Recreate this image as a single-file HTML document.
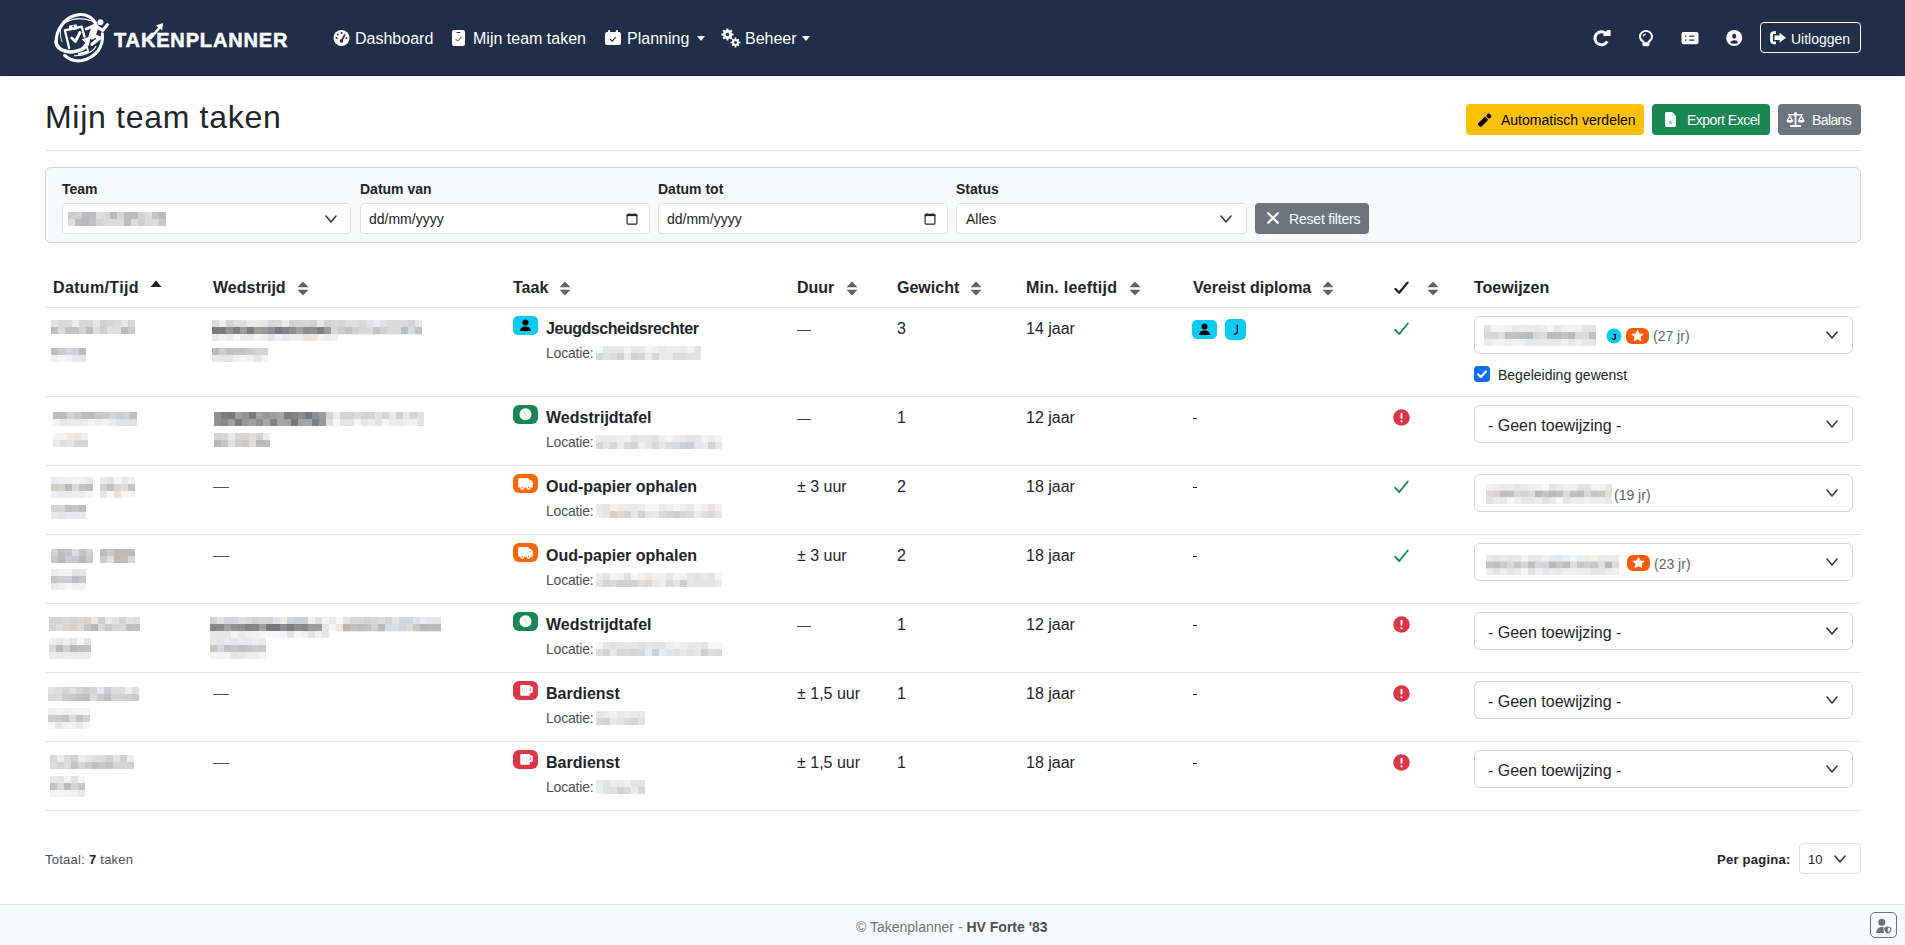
<!DOCTYPE html>
<html><head><meta charset="utf-8"><title>Mijn team taken</title><style>
*{box-sizing:border-box;margin:0;padding:0}
html,body{width:1905px;height:945px;overflow:hidden;background:#fff;font-family:"Liberation Sans",sans-serif;color:#212529}
.a{position:absolute;white-space:nowrap}
.blur{position:absolute;display:block}
svg{display:block}
.nav{position:absolute;left:0;top:0;width:1905px;height:75px;background:#202e4a;box-shadow:0 1px 0 #18203a,0 2px 6px rgba(0,0,0,.08)}
.nt{color:#fff;font-size:16px;line-height:20px}
.btn{position:absolute;border-radius:4px;font-size:14px;line-height:20px}
.card{position:absolute;left:45px;top:167px;width:1816px;height:76px;background:#f8f9fa;border:1px solid #d3d6da;border-radius:6px}
.lbl{font-size:14px;font-weight:bold;color:#212529;line-height:16px}
.inp{position:absolute;background:#fff;border:1px solid #dee2e6;border-radius:4px;height:31px}
.th{font-size:16px;font-weight:bold;line-height:20px;color:#212529}
.hl{position:absolute;left:45px;width:1816px;height:1px;background:#dee2e6}
.td{font-size:16px;line-height:20px;color:#212529}
.tn{font-size:16px;font-weight:bold;line-height:20px;color:#212529}
.loc{font-size:14px;line-height:18px;color:#4a4f55}
.sel{position:absolute;left:1474px;width:379px;height:38px;background:#fff;border:1px solid #cfd4da;border-radius:6px}
.ti{position:absolute;left:513px;width:25px;height:19px;border-radius:5px}
</style></head><body>
<div class="nav"></div>
<svg class="a" style="left:52px;top:12px" width="60" height="54" viewBox="0 0 1050 945">
<g fill="none" stroke="#fff" stroke-linecap="round" stroke-linejoin="round">
<path d="M75 540 C60 300 250 60 480 45 C600 40 700 90 760 190" stroke-width="55"/>
<path d="M250 175 C380 105 560 100 720 165" stroke-width="24"/>
<path d="M200 150 C140 250 130 420 175 520" stroke-width="16"/>
<path d="M70 520 C90 690 320 740 510 660 C570 630 600 590 625 510" stroke-width="62"/>
<path d="M880 380 C910 610 760 800 520 850 C400 870 300 830 220 760" stroke-width="55"/>
<path d="M770 600 C720 700 560 770 390 765" stroke-width="20"/>
<path d="M300 630 L225 320 L520 258 L568 430" stroke-width="40"/>
<path d="M605 595 L632 690 L470 735" stroke-width="36"/>
<path d="M345 455 L410 515 L488 360" stroke-width="52"/>
<path d="M755 260 L700 420" stroke-width="120"/>
<path d="M735 240 L600 295" stroke-width="55"/>
<path d="M770 250 L890 320 L968 222" stroke-width="55"/>
<path d="M730 410 L835 455 L700 565" stroke-width="60"/>
</g>
<g fill="#fff">
<path d="M520 475 L680 425 L640 600 Z"/>
<circle cx="848" cy="178" r="52"/>
<path d="M295 240 L430 215 L445 300 L310 325 Z"/>
</g>
<circle cx="370" cy="252" r="14" fill="#202e4a"/>
</svg>
<div class="a" style="left:114px;top:28px;color:#fff;font-size:20px;font-weight:bold;letter-spacing:0.85px;line-height:24px;-webkit-text-stroke:0.5px #fff">TAKENPLANNER</div>
<svg class="a" style="left:148px;top:21px" width="17" height="19" viewBox="0 0 17 19"><path d="M2 18 L12.5 5.5" stroke="#fff" stroke-width="2.6"/><path d="M8 4.6 L15 2 L14.2 9.5 Z" fill="#fff"/></svg>
<svg class="a" style="left:333px;top:30px" width="17" height="16" viewBox="0 0 16 16"><circle cx="8" cy="8" r="8" fill="#fff"/><circle cx="8" cy="3" r="1" fill="#202e4a"/><circle cx="4.3" cy="4.6" r="1" fill="#202e4a"/><circle cx="3" cy="8" r="1" fill="#202e4a"/><circle cx="13" cy="8" r="1" fill="#202e4a"/><path d="M8 11 L11.5 4.5" stroke="#202e4a" stroke-width="1.6"/><circle cx="8" cy="11" r="1.8" fill="#202e4a"/></svg>
<div class="a nt" style="left:355px;top:29px">Dashboard</div>
<svg class="a" style="left:452px;top:30px" width="13" height="16" viewBox="0 0 13 16"><rect x="0" y="0" width="13" height="16" rx="2" fill="#fff"/><rect x="4.5" y="2" width="4" height="1.1" rx="0.5" fill="#202e4a"/><path d="M3.8 9.2 L5.7 11.1 L9.3 7" fill="none" stroke="#202e4a" stroke-width="0.9"/></svg>
<div class="a nt" style="left:473px;top:29px">Mijn team taken</div>
<svg class="a" style="left:605px;top:30px" width="16" height="15" viewBox="0 0 16 15"><rect x="0" y="2" width="16" height="13" rx="2" fill="#fff"/><rect x="3" y="0" width="2.2" height="4" rx="1" fill="#fff"/><rect x="10.8" y="0" width="2.2" height="4" rx="1" fill="#fff"/><path d="M5 9 L7.2 11.2 L11 7" fill="none" stroke="#202e4a" stroke-width="1.1"/></svg>
<div class="a nt" style="left:627px;top:29px">Planning</div>
<div class="a" style="left:697px;top:36px;width:0;height:0;border-left:4.5px solid transparent;border-right:4.5px solid transparent;border-top:5px solid #fff"></div>
<svg class="a" style="left:721px;top:28px" width="20" height="20" viewBox="0 0 20 20"><g fill="#fff"><circle cx="6.5" cy="6.5" r="4.5"/><path d="M5.5 0.5h2v2.5h-2zM5.5 10h2v2.5h-2zM0.5 5.5h2.5v2h-2.5zM10 5.5h2.5v2h-2.5zM1.5 2.9l1.4-1.4 1.8 1.8-1.4 1.4zM8.3 9.7l1.4-1.4 1.8 1.8-1.4 1.4zM1.5 10.1l1.8-1.8 1.4 1.4-1.8 1.8zM8.3 3.3l1.8-1.8 1.4 1.4-1.8 1.8z"/><circle cx="14.5" cy="14.5" r="3.6"/><path d="M13.7 9.5h1.6v2h-1.6zM13.7 17.5h1.6v2h-1.6zM9.5 13.7h2v1.6h-2zM17.5 13.7h2v1.6h-2zM10.7 11.8l1.1-1.1 1.4 1.4-1.1 1.1zM15.8 16.9l1.1-1.1 1.4 1.4-1.1 1.1zM10.7 17.2l1.4-1.4 1.1 1.1-1.4 1.4zM15.8 12.1l1.4-1.4 1.1 1.1-1.4 1.4z"/></g><circle cx="6.5" cy="6.5" r="1.7" fill="#202e4a"/><circle cx="14.5" cy="14.5" r="1.4" fill="#202e4a"/></svg>
<div class="a nt" style="left:745px;top:29px">Beheer</div>
<div class="a" style="left:802px;top:36px;width:0;height:0;border-left:4.5px solid transparent;border-right:4.5px solid transparent;border-top:5px solid #fff"></div>
<svg class="a" style="left:1593px;top:30px" width="18" height="17" viewBox="0 0 18 17"><path d="M12.68 3.32 A6.5 6.5 0 1 0 14.24 11.35" fill="none" stroke="#fff" stroke-width="3.0"/><path d="M14.4 0 H17.6 V5.9 H10.5 V4.4Z" fill="#fff"/></svg>
<svg class="a" style="left:1639px;top:30px" width="14" height="17" viewBox="0 0 14 17"><path d="M7 0 C10.9 0 14 3 14 6.7 C14 9.2 12.3 10.9 11 12.6 H3 C1.7 10.9 0 9.2 0 6.7 C0 3 3.1 0 7 0Z" fill="#fff"/><path d="M7 2.0 C4.2 2.0 2.0 4.1 2.0 6.6 C2.0 8.3 3.6 9.8 5.2 11.2 L7 12.3 L8.8 11.2 C10.4 9.8 12 8.3 12 6.6 C12 4.1 9.8 2.0 7 2.0Z" fill="#202e4a"/><path d="M3.4 12.4 H10.6 V14.3 A1.9 1.9 0 0 1 8.7 16.2 H5.3 A1.9 1.9 0 0 1 3.4 14.3Z" fill="#fff"/><path d="M4.1 6.4 A3 3 0 0 1 6.8 4.1" fill="none" stroke="#fff" stroke-width="1.4"/></svg>
<svg class="a" style="left:1681px;top:32px" width="18" height="13" viewBox="0 0 18 13"><rect x="0.5" y="0" width="17" height="12.3" rx="2" fill="#fff"/><rect x="4" y="3.5" width="1.4" height="1.4" fill="#3a4560"/><rect x="8.2" y="3.5" width="5" height="1.4" fill="#3a4560"/><rect x="4" y="7.4" width="1.4" height="1.4" fill="#3a4560"/><rect x="8.2" y="7.4" width="5" height="1.4" fill="#3a4560"/></svg>
<svg class="a" style="left:1725px;top:30px" width="18" height="16" viewBox="0 0 16 16"><circle cx="8.2" cy="8" r="8" fill="#fff"/><ellipse cx="8.2" cy="6.2" rx="2" ry="2.6" fill="#202e4a"/><path d="M4.4 13 C4.8 11 6.3 10.3 8.2 10.3 C10.1 10.3 11.6 11 12 13 C10.9 13.6 9.6 13.8 8.2 13.8 C6.8 13.8 5.5 13.6 4.4 13Z" fill="#202e4a"/></svg>
<div class="btn" style="left:1760px;top:22px;width:101px;height:31px;border:1px solid #fff"></div>
<svg class="a" style="left:1770px;top:30px" width="16" height="15" viewBox="0 0 16 15"><path d="M6 2.6 H3.8 A2.3 2.3 0 0 0 1.5 4.9 V10.6 A2.3 2.3 0 0 0 3.8 12.9 H6" fill="none" stroke="#fff" stroke-width="2.8"/><path d="M9.6 2.7 L15.9 7.8 L9.6 12.8 V9.9 H4.5 V5.6 H9.6 Z" fill="#fff"/></svg>
<div class="a nt" style="left:1791px;top:29px;font-size:14px">Uitloggen</div>
<div class="a" style="left:45px;top:97px;font-size:32px;line-height:40px;letter-spacing:0.7px;color:#212529">Mijn team taken</div>
<div class="btn" style="left:1466px;top:104px;width:178px;height:31px;background:#ffc107"></div>
<svg class="a" style="left:1476px;top:112px" width="17" height="16" viewBox="0 0 17 16"><rect x="1.4" y="7.65" width="11" height="4.6" rx="1.2" transform="rotate(-45 6.9 9.95)" fill="#000"/><rect x="10.9" y="1.65" width="4" height="4.6" rx="1.2" transform="rotate(-45 12.9 3.95)" fill="#000"/></svg>
<div class="a" style="left:1501px;top:110px;font-size:14px;line-height:20px;color:#000">Automatisch verdelen</div>
<div class="btn" style="left:1652px;top:104px;width:118px;height:31px;background:#198754"></div>
<svg class="a" style="left:1665px;top:112px" width="11" height="15" viewBox="0 0 11 15"><path d="M1.5 0 H7 L11 4 V13.5 A1.5 1.5 0 0 1 9.5 15 H1.5 A1.5 1.5 0 0 1 0 13.5 V1.5 A1.5 1.5 0 0 1 1.5 0Z" fill="#fff"/><path d="M7 0 V4 H11" fill="#d1e7dd"/><path d="M3.9 8.4 L7 12 M7 8.4 L3.9 12" stroke="#3a9a6a" stroke-width="0.7"/></svg>
<div class="a" style="left:1687px;top:110px;font-size:14px;line-height:20px;color:#fff;letter-spacing:-0.5px">Export Excel</div>
<div class="btn" style="left:1778px;top:104px;width:83px;height:31px;background:#6c757d"></div>
<svg class="a" style="left:1786px;top:112px" width="19" height="15" viewBox="0 0 19 15"><g fill="#fff"><rect x="8.6" y="1" width="1.8" height="12"/><rect x="4" y="13" width="11" height="2" rx="0.5"/><rect x="2" y="2" width="15" height="1.6" rx="0.8"/><circle cx="9.5" cy="1.5" r="1.5"/><path d="M0.5 8.5 L3.8 3 L7.1 8.5 A3.3 2.2 0 0 1 0.5 8.5Z"/><path d="M11.9 8.5 L15.2 3 L18.5 8.5 A3.3 2.2 0 0 1 11.9 8.5Z"/></g><path d="M2.3 8 L3.8 5.4 L5.3 8Z M13.7 8 L15.2 5.4 L16.7 8Z" fill="#6c757d"/></svg>
<div class="a" style="left:1812px;top:110px;font-size:14px;line-height:20px;color:#fff;letter-spacing:-0.6px">Balans</div>
<div class="hl" style="top:150px"></div>
<div class="card"></div>
<div class="a lbl" style="left:62px;top:181px">Team</div>
<div class="a lbl" style="left:360px;top:181px">Datum van</div>
<div class="a lbl" style="left:658px;top:181px">Datum tot</div>
<div class="a lbl" style="left:956px;top:181px">Status</div>
<div class="inp" style="left:62px;top:203px;width:289px"></div>
<svg class="blur" style="left:68px;top:212px;width:98px;height:14px" viewBox="0 0 98 14.0"><rect x="0" y="0.0" width="7" height="7.3" fill="#cfccc9"/><rect x="7" y="0.0" width="7" height="7.3" fill="#d1d1d1"/><rect x="14" y="0.0" width="7" height="7.3" fill="#babbbf"/><rect x="21" y="0.0" width="7" height="7.3" fill="#bbbec2"/><rect x="28" y="0.0" width="7" height="7.3" fill="#dddddd"/><rect x="35" y="0.0" width="7" height="7.3" fill="#dbd8d5"/><rect x="42" y="0.0" width="7" height="7.3" fill="#bababa"/><rect x="49" y="0.0" width="7" height="7.3" fill="#d7d5d3"/><rect x="56" y="0.0" width="7" height="7.3" fill="#bfbcb9"/><rect x="63" y="0.0" width="7" height="7.3" fill="#bbbcc0"/><rect x="70" y="0.0" width="7" height="7.3" fill="#d3d3d3"/><rect x="77" y="0.0" width="7" height="7.3" fill="#dcdcdc"/><rect x="84" y="0.0" width="7" height="7.3" fill="#c4c5c9"/><rect x="91" y="0.0" width="7" height="7.3" fill="#b9babe"/><rect x="0" y="7.0" width="7" height="7.3" fill="#e1dfdd"/><rect x="7" y="7.0" width="7" height="7.3" fill="#bebbb8"/><rect x="14" y="7.0" width="7" height="7.3" fill="#b8b9bd"/><rect x="21" y="7.0" width="7" height="7.3" fill="#bdc0c4"/><rect x="28" y="7.0" width="7" height="7.3" fill="#d5d2cf"/><rect x="35" y="7.0" width="7" height="7.3" fill="#dadada"/><rect x="42" y="7.0" width="7" height="7.3" fill="#d9dce0"/><rect x="49" y="7.0" width="7" height="7.3" fill="#dedbd8"/><rect x="56" y="7.0" width="7" height="7.3" fill="#bcbdc1"/><rect x="63" y="7.0" width="7" height="7.3" fill="#dfdcd9"/><rect x="70" y="7.0" width="7" height="7.3" fill="#cfcfcf"/><rect x="77" y="7.0" width="7" height="7.3" fill="#dbdbdb"/><rect x="84" y="7.0" width="7" height="7.3" fill="#dcdcdc"/><rect x="91" y="7.0" width="7" height="7.3" fill="#c9c7c5"/></svg>
<svg class="a" style="left:325px;top:215px" width="12" height="8" viewBox="0 0 12 8"><path d="M1 1 L6.0 7.0 L11 1" fill="none" stroke="#343a40" stroke-width="1.6" stroke-linecap="round" stroke-linejoin="round"/></svg>
<div class="inp" style="left:360px;top:203px;width:290px"></div>
<div class="a" style="left:369px;top:210px;font-size:14px;line-height:18px;color:#212529">dd/mm/yyyy</div>
<svg class="a" style="left:626px;top:212px" width="12" height="13" viewBox="0 0 12 13"><rect x="1.1" y="2.3" width="9.8" height="9.9" rx="1" fill="none" stroke="#212529" stroke-width="1.2"/><rect x="0.8" y="2" width="10.4" height="2.1" fill="#212529"/><path d="M2.5 2 L3 0.4 L3.5 2Z M8.5 2 L9 0.4 L9.5 2Z" fill="#212529"/></svg>
<div class="inp" style="left:658px;top:203px;width:290px"></div>
<div class="a" style="left:667px;top:210px;font-size:14px;line-height:18px;color:#212529">dd/mm/yyyy</div>
<svg class="a" style="left:924px;top:212px" width="12" height="13" viewBox="0 0 12 13"><rect x="1.1" y="2.3" width="9.8" height="9.9" rx="1" fill="none" stroke="#212529" stroke-width="1.2"/><rect x="0.8" y="2" width="10.4" height="2.1" fill="#212529"/><path d="M2.5 2 L3 0.4 L3.5 2Z M8.5 2 L9 0.4 L9.5 2Z" fill="#212529"/></svg>
<div class="inp" style="left:956px;top:203px;width:291px"></div>
<div class="a" style="left:966px;top:210px;font-size:14px;line-height:18px;color:#212529">Alles</div>
<svg class="a" style="left:1220px;top:215px" width="12" height="8" viewBox="0 0 12 8"><path d="M1 1 L6.0 7.0 L11 1" fill="none" stroke="#343a40" stroke-width="1.6" stroke-linecap="round" stroke-linejoin="round"/></svg>
<div class="btn" style="left:1255px;top:203px;width:114px;height:31px;background:#6c757d"></div>
<svg class="a" style="left:1267px;top:212px" width="12" height="12" viewBox="0 0 12 12"><path d="M1.2 1.2 L10.8 10.8 M10.8 1.2 L1.2 10.8" stroke="#fff" stroke-width="2.2" stroke-linecap="round"/></svg>
<div class="a" style="left:1289px;top:209px;font-size:14px;line-height:20px;color:#fff;letter-spacing:-0.2px">Reset filters</div>
<div class="a th" style="left:53px;top:278px;letter-spacing:0.35px">Datum/Tijd</div>
<div class="a th" style="left:213px;top:278px;letter-spacing:0">Wedstrijd</div>
<svg class="a" style="left:297px;top:281px" width="12" height="15" viewBox="0 0 12 15"><path d="M6 0.5 L11.5 6.3 H0.5Z M6 14.5 L11.5 8.7 H0.5Z" fill="#5f6368"/></svg>
<div class="a th" style="left:513px;top:278px;letter-spacing:0">Taak</div>
<svg class="a" style="left:559px;top:281px" width="12" height="15" viewBox="0 0 12 15"><path d="M6 0.5 L11.5 6.3 H0.5Z M6 14.5 L11.5 8.7 H0.5Z" fill="#5f6368"/></svg>
<div class="a th" style="left:797px;top:278px;letter-spacing:0">Duur</div>
<svg class="a" style="left:846px;top:281px" width="12" height="15" viewBox="0 0 12 15"><path d="M6 0.5 L11.5 6.3 H0.5Z M6 14.5 L11.5 8.7 H0.5Z" fill="#5f6368"/></svg>
<div class="a th" style="left:897px;top:278px;letter-spacing:0">Gewicht</div>
<svg class="a" style="left:970px;top:281px" width="12" height="15" viewBox="0 0 12 15"><path d="M6 0.5 L11.5 6.3 H0.5Z M6 14.5 L11.5 8.7 H0.5Z" fill="#5f6368"/></svg>
<div class="a th" style="left:1026px;top:278px;letter-spacing:0.25px">Min. leeftijd</div>
<svg class="a" style="left:1129px;top:281px" width="12" height="15" viewBox="0 0 12 15"><path d="M6 0.5 L11.5 6.3 H0.5Z M6 14.5 L11.5 8.7 H0.5Z" fill="#5f6368"/></svg>
<div class="a th" style="left:1193px;top:278px;letter-spacing:0">Vereist diploma</div>
<svg class="a" style="left:1322px;top:281px" width="12" height="15" viewBox="0 0 12 15"><path d="M6 0.5 L11.5 6.3 H0.5Z M6 14.5 L11.5 8.7 H0.5Z" fill="#5f6368"/></svg>
<div class="a th" style="left:1474px;top:278px;letter-spacing:0">Toewijzen</div>
<svg class="a" style="left:150px;top:280px" width="12" height="8" viewBox="0 0 12 8"><path d="M6 0.5 L11.5 7 H0.5Z" fill="#212529"/></svg>
<svg class="a" style="left:1394px;top:281px" width="15" height="14" viewBox="0 0 15 14"><path d="M1.5 8 L5.2 11.8 L13.6 1.6" fill="none" stroke="#212529" stroke-width="2.3" stroke-linecap="round" stroke-linejoin="round"/></svg>
<svg class="a" style="left:1427px;top:281px" width="12" height="15" viewBox="0 0 12 15"><path d="M6 0.5 L11.5 6.3 H0.5Z M6 14.5 L11.5 8.7 H0.5Z" fill="#5f6368"/></svg>
<div class="hl" style="top:307px;background:#dfe2e6"></div>
<div class="hl" style="top:396px"></div>
<div class="hl" style="top:465px"></div>
<div class="hl" style="top:534px"></div>
<div class="hl" style="top:603px"></div>
<div class="hl" style="top:672px"></div>
<div class="hl" style="top:741px"></div>
<div class="hl" style="top:810px"></div>
<svg class="blur" style="left:51px;top:320px;width:84px;height:14px" viewBox="0 0 84 14.0"><rect x="0" y="0.0" width="7" height="7.3" fill="#e1e2e6"/><rect x="7" y="0.0" width="7" height="7.3" fill="#d8dbdf"/><rect x="14" y="0.0" width="7" height="7.3" fill="#dadbdf"/><rect x="21" y="0.0" width="7" height="7.3" fill="#efedeb"/><rect x="28" y="0.0" width="7" height="7.3" fill="#d6d9dd"/><rect x="35" y="0.0" width="7" height="7.3" fill="#d8d5d2"/><rect x="42" y="0.0" width="7" height="7.3" fill="#e7e4e1"/><rect x="49" y="0.0" width="7" height="7.3" fill="#cecfd3"/><rect x="56" y="0.0" width="7" height="7.3" fill="#d5d6da"/><rect x="63" y="0.0" width="7" height="7.3" fill="#dadde1"/><rect x="70" y="0.0" width="7" height="7.3" fill="#e9e7e5"/><rect x="77" y="0.0" width="7" height="7.3" fill="#d5d6da"/><rect x="0" y="7.0" width="7" height="7.3" fill="#bcbcbc"/><rect x="7" y="7.0" width="7" height="7.3" fill="#dcdad8"/><rect x="14" y="7.0" width="7" height="7.3" fill="#bfc2c6"/><rect x="21" y="7.0" width="7" height="7.3" fill="#c5c3c1"/><rect x="28" y="7.0" width="7" height="7.3" fill="#d2d2d2"/><rect x="35" y="7.0" width="7" height="7.3" fill="#babbbf"/><rect x="42" y="7.0" width="7" height="7.3" fill="#d9dce0"/><rect x="49" y="7.0" width="7" height="7.3" fill="#cacdd1"/><rect x="56" y="7.0" width="7" height="7.3" fill="#e2e0de"/><rect x="63" y="7.0" width="7" height="7.3" fill="#e1dfdd"/><rect x="70" y="7.0" width="7" height="7.3" fill="#bcbcbc"/><rect x="77" y="7.0" width="7" height="7.3" fill="#cdcbc9"/></svg>
<svg class="blur" style="left:51px;top:348px;width:35px;height:14px" viewBox="0 0 35 14.0"><rect x="0" y="0.0" width="7" height="7.3" fill="#bcbcbc"/><rect x="7" y="0.0" width="7" height="7.3" fill="#c9cace"/><rect x="14" y="0.0" width="7" height="7.3" fill="#d1d4d8"/><rect x="21" y="0.0" width="7" height="7.3" fill="#cdd0d4"/><rect x="28" y="0.0" width="7" height="7.3" fill="#bdbbb9"/><rect x="0" y="7.0" width="7" height="7.3" fill="#f0edea"/><rect x="7" y="7.0" width="7" height="7.3" fill="#f5f5f5"/><rect x="14" y="7.0" width="7" height="7.3" fill="#f1f1f1"/><rect x="21" y="7.0" width="7" height="7.3" fill="#e5e8ec"/><rect x="28" y="7.0" width="7" height="7.3" fill="#e9e6e3"/></svg>
<svg class="blur" style="left:212px;top:320px;width:210px;height:21px" viewBox="0 0 210 21.0"><rect x="0" y="0.0" width="7" height="7.3" fill="#dedcda"/><rect x="7" y="0.0" width="7" height="7.3" fill="#efedeb"/><rect x="14" y="0.0" width="7" height="7.3" fill="#d3d0cd"/><rect x="21" y="0.0" width="7" height="7.3" fill="#e0dedc"/><rect x="28" y="0.0" width="7" height="7.3" fill="#dcdfe3"/><rect x="35" y="0.0" width="7" height="7.3" fill="#edeae7"/><rect x="42" y="0.0" width="7" height="7.3" fill="#eceae8"/><rect x="49" y="0.0" width="7" height="7.3" fill="#e7e8ec"/><rect x="56" y="0.0" width="7" height="7.3" fill="#dad8d6"/><rect x="63" y="0.0" width="7" height="7.3" fill="#dddbd9"/><rect x="70" y="0.0" width="7" height="7.3" fill="#efece9"/><rect x="77" y="0.0" width="7" height="7.3" fill="#d2d2d2"/><rect x="84" y="0.0" width="7" height="7.3" fill="#d6d3d0"/><rect x="91" y="0.0" width="7" height="7.3" fill="#d8d5d2"/><rect x="98" y="0.0" width="7" height="7.3" fill="#d2d0ce"/><rect x="105" y="0.0" width="7" height="7.3" fill="#e6e7eb"/><rect x="112" y="0.0" width="7" height="7.3" fill="#d0d3d7"/><rect x="119" y="0.0" width="7" height="7.3" fill="#d7d7d7"/><rect x="126" y="0.0" width="7" height="7.3" fill="#d6d4d2"/><rect x="133" y="0.0" width="7" height="7.3" fill="#dcdfe3"/><rect x="140" y="0.0" width="7" height="7.3" fill="#dfe0e4"/><rect x="147" y="0.0" width="7" height="7.3" fill="#dbd8d5"/><rect x="154" y="0.0" width="7" height="7.3" fill="#e2e3e7"/><rect x="161" y="0.0" width="7" height="7.3" fill="#eaebef"/><rect x="168" y="0.0" width="7" height="7.3" fill="#e2e2e2"/><rect x="175" y="0.0" width="7" height="7.3" fill="#dadbdf"/><rect x="182" y="0.0" width="7" height="7.3" fill="#dedcda"/><rect x="189" y="0.0" width="7" height="7.3" fill="#dedcda"/><rect x="196" y="0.0" width="7" height="7.3" fill="#d5d3d1"/><rect x="203" y="0.0" width="7" height="7.3" fill="#e6e4e2"/><rect x="0" y="7.0" width="7" height="7.3" fill="#7e7b78"/><rect x="7" y="7.0" width="7" height="7.3" fill="#7f7c79"/><rect x="14" y="7.0" width="7" height="7.3" fill="#979491"/><rect x="21" y="7.0" width="7" height="7.3" fill="#7c7f83"/><rect x="28" y="7.0" width="7" height="7.3" fill="#9e9e9e"/><rect x="35" y="7.0" width="7" height="7.3" fill="#7e7e7e"/><rect x="42" y="7.0" width="7" height="7.3" fill="#9f9c99"/><rect x="49" y="7.0" width="7" height="7.3" fill="#9a9a9a"/><rect x="56" y="7.0" width="7" height="7.3" fill="#8d8e92"/><rect x="63" y="7.0" width="7" height="7.3" fill="#797979"/><rect x="70" y="7.0" width="7" height="7.3" fill="#838488"/><rect x="77" y="7.0" width="7" height="7.3" fill="#93908d"/><rect x="84" y="7.0" width="7" height="7.3" fill="#9da0a4"/><rect x="91" y="7.0" width="7" height="7.3" fill="#8c8d91"/><rect x="98" y="7.0" width="7" height="7.3" fill="#93918f"/><rect x="105" y="7.0" width="7" height="7.3" fill="#7f7f7f"/><rect x="112" y="7.0" width="7" height="7.3" fill="#9b9997"/><rect x="119" y="7.0" width="7" height="7.3" fill="#dad8d6"/><rect x="126" y="7.0" width="7" height="7.3" fill="#cbcbcb"/><rect x="133" y="7.0" width="7" height="7.3" fill="#c1c1c1"/><rect x="140" y="7.0" width="7" height="7.3" fill="#cacdd1"/><rect x="147" y="7.0" width="7" height="7.3" fill="#d9d6d3"/><rect x="154" y="7.0" width="7" height="7.3" fill="#d9d9d9"/><rect x="161" y="7.0" width="7" height="7.3" fill="#c3c4c8"/><rect x="168" y="7.0" width="7" height="7.3" fill="#d2cfcc"/><rect x="175" y="7.0" width="7" height="7.3" fill="#dadada"/><rect x="182" y="7.0" width="7" height="7.3" fill="#d6d9dd"/><rect x="189" y="7.0" width="7" height="7.3" fill="#babdc1"/><rect x="196" y="7.0" width="7" height="7.3" fill="#d6d9dd"/><rect x="203" y="7.0" width="7" height="7.3" fill="#bfc2c6"/><rect x="0" y="14.0" width="7" height="7.3" fill="#e7e8ec"/><rect x="7" y="14.0" width="7" height="7.3" fill="#f1f2f6"/><rect x="14" y="14.0" width="7" height="7.3" fill="#efece9"/><rect x="21" y="14.0" width="7" height="7.3" fill="#f8f5f2"/><rect x="28" y="14.0" width="7" height="7.3" fill="#edebe9"/><rect x="35" y="14.0" width="7" height="7.3" fill="#ece9e6"/><rect x="42" y="14.0" width="7" height="7.3" fill="#f6f4f2"/><rect x="49" y="14.0" width="7" height="7.3" fill="#ededed"/><rect x="56" y="14.0" width="7" height="7.3" fill="#dfe2e6"/><rect x="63" y="14.0" width="7" height="7.3" fill="#eef1f5"/><rect x="70" y="14.0" width="7" height="7.3" fill="#e6e7eb"/><rect x="77" y="14.0" width="7" height="7.3" fill="#f1efed"/><rect x="84" y="14.0" width="7" height="7.3" fill="#eaedf1"/><rect x="91" y="14.0" width="7" height="7.3" fill="#e7e4e1"/><rect x="98" y="14.0" width="7" height="7.3" fill="#e8e5e2"/><rect x="105" y="14.0" width="7" height="7.3" fill="#f4f1ee"/><rect x="112" y="14.0" width="7" height="7.3" fill="#efece9"/><rect x="119" y="14.0" width="7" height="7.3" fill="#eff0f4"/></svg>
<svg class="blur" style="left:212px;top:348px;width:56px;height:14px" viewBox="0 0 56 14.0"><rect x="0" y="0.0" width="7" height="7.3" fill="#bcbab8"/><rect x="7" y="0.0" width="7" height="7.3" fill="#cecece"/><rect x="14" y="0.0" width="7" height="7.3" fill="#c3c1bf"/><rect x="21" y="0.0" width="7" height="7.3" fill="#c8c6c4"/><rect x="28" y="0.0" width="7" height="7.3" fill="#c7c5c3"/><rect x="35" y="0.0" width="7" height="7.3" fill="#cdcdcd"/><rect x="42" y="0.0" width="7" height="7.3" fill="#d5d3d1"/><rect x="49" y="0.0" width="7" height="7.3" fill="#d1d1d1"/><rect x="0" y="7.0" width="7" height="7.3" fill="#eae7e4"/><rect x="7" y="7.0" width="7" height="7.3" fill="#e6e6e6"/><rect x="14" y="7.0" width="7" height="7.3" fill="#e4e5e9"/><rect x="21" y="7.0" width="7" height="7.3" fill="#f3f0ed"/><rect x="28" y="7.0" width="7" height="7.3" fill="#f3f4f8"/><rect x="35" y="7.0" width="7" height="7.3" fill="#eef1f5"/><rect x="42" y="7.0" width="7" height="7.3" fill="#e4e5e9"/><rect x="49" y="7.0" width="7" height="7.3" fill="#f6f3f0"/></svg>
<svg class="a" style="left:513px;top:316px" width="25" height="19" viewBox="0 0 25 19"><rect width="25" height="19" rx="5" fill="#0dcaf0"/><circle cx="12.5" cy="6.5" r="3" fill="#000"/><path d="M7 15 C7.5 11.5 9.5 10.5 12.5 10.5 C15.5 10.5 17.5 11.5 18 15Z" fill="#000"/></svg>
<div class="a tn" style="left:546px;top:319px;letter-spacing:-0.45px">Jeugdscheidsrechter</div>
<div class="a loc" style="left:546px;top:344px;letter-spacing:-0.2px">Locatie:</div>
<svg class="blur" style="left:596px;top:346px;width:105px;height:14px" viewBox="0 0 105 14.0"><rect x="0" y="0.0" width="7" height="7.3" fill="#f3f6fa"/><rect x="7" y="0.0" width="7" height="7.3" fill="#e3e6ea"/><rect x="14" y="0.0" width="7" height="7.3" fill="#eae8e6"/><rect x="21" y="0.0" width="7" height="7.3" fill="#e9e9e9"/><rect x="28" y="0.0" width="7" height="7.3" fill="#f2f0ee"/><rect x="35" y="0.0" width="7" height="7.3" fill="#eae7e4"/><rect x="42" y="0.0" width="7" height="7.3" fill="#ebe9e7"/><rect x="49" y="0.0" width="7" height="7.3" fill="#f6f4f2"/><rect x="56" y="0.0" width="7" height="7.3" fill="#f0eeec"/><rect x="63" y="0.0" width="7" height="7.3" fill="#e5e8ec"/><rect x="70" y="0.0" width="7" height="7.3" fill="#ececec"/><rect x="77" y="0.0" width="7" height="7.3" fill="#ededed"/><rect x="84" y="0.0" width="7" height="7.3" fill="#eaebef"/><rect x="91" y="0.0" width="7" height="7.3" fill="#f4f2f0"/><rect x="98" y="0.0" width="7" height="7.3" fill="#e6e4e2"/><rect x="0" y="7.0" width="7" height="7.3" fill="#d6d7db"/><rect x="7" y="7.0" width="7" height="7.3" fill="#dee1e5"/><rect x="14" y="7.0" width="7" height="7.3" fill="#dedede"/><rect x="21" y="7.0" width="7" height="7.3" fill="#d4d1ce"/><rect x="28" y="7.0" width="7" height="7.3" fill="#eaeaea"/><rect x="35" y="7.0" width="7" height="7.3" fill="#cdd0d4"/><rect x="42" y="7.0" width="7" height="7.3" fill="#d6d6d6"/><rect x="49" y="7.0" width="7" height="7.3" fill="#edeae7"/><rect x="56" y="7.0" width="7" height="7.3" fill="#d9d6d3"/><rect x="63" y="7.0" width="7" height="7.3" fill="#eceae8"/><rect x="70" y="7.0" width="7" height="7.3" fill="#e6e9ed"/><rect x="77" y="7.0" width="7" height="7.3" fill="#dddad7"/><rect x="84" y="7.0" width="7" height="7.3" fill="#dddee2"/><rect x="91" y="7.0" width="7" height="7.3" fill="#e4e2e0"/><rect x="98" y="7.0" width="7" height="7.3" fill="#e1e4e8"/></svg>
<div class="a" style="left:797px;top:330px;width:14px;height:1px;background:#3d4246"></div>
<div class="a td" style="left:897px;top:319px">3</div>
<div class="a td" style="left:1026px;top:319px">14 jaar</div>
<svg class="a" style="left:1192px;top:320px" width="25" height="19" viewBox="0 0 25 19"><rect width="25" height="19" rx="5" fill="#0dcaf0"/><circle cx="12.5" cy="6.5" r="3" fill="#000"/><path d="M7 15 C7.5 11.5 9.5 10.5 12.5 10.5 C15.5 10.5 17.5 11.5 18 15Z" fill="#000"/></svg>
<svg class="a" style="left:1225px;top:319px" width="21" height="21" viewBox="0 0 21 21"><rect width="21" height="21" rx="5" fill="#0dcaf0"/><path d="M12.3 5.8 V12.8 A2.2 2.2 0 0 1 10.1 15 H9" fill="none" stroke="#000" stroke-width="1.3"/></svg>
<svg class="a" style="left:1394px;top:322px" width="15" height="14" viewBox="0 0 15 14"><path d="M1.2 7.8 L5.3 12 L13.8 1.5" fill="none" stroke="#198754" stroke-width="1.9" stroke-linecap="round" stroke-linejoin="round"/></svg>
<div class="sel" style="top:316px"></div><svg class="a" style="left:1826px;top:331px" width="12" height="8" viewBox="0 0 12 8"><path d="M1 1 L6.0 7.0 L11 1" fill="none" stroke="#343a40" stroke-width="1.6" stroke-linecap="round" stroke-linejoin="round"/></svg><svg class="blur" style="left:1484px;top:325px;width:112px;height:21px" viewBox="0 0 112 21.0"><rect x="0" y="0.0" width="7" height="7.3" fill="#e2e2e2"/><rect x="7" y="0.0" width="7" height="7.3" fill="#f6f6f6"/><rect x="14" y="0.0" width="7" height="7.3" fill="#f5f2ef"/><rect x="21" y="0.0" width="7" height="7.3" fill="#f2efec"/><rect x="28" y="0.0" width="7" height="7.3" fill="#e8e8e8"/><rect x="35" y="0.0" width="7" height="7.3" fill="#edeae7"/><rect x="42" y="0.0" width="7" height="7.3" fill="#e9eaee"/><rect x="49" y="0.0" width="7" height="7.3" fill="#e7e8ec"/><rect x="56" y="0.0" width="7" height="7.3" fill="#e9ecf0"/><rect x="63" y="0.0" width="7" height="7.3" fill="#f7f5f3"/><rect x="70" y="0.0" width="7" height="7.3" fill="#e6e6e6"/><rect x="77" y="0.0" width="7" height="7.3" fill="#f1efed"/><rect x="84" y="0.0" width="7" height="7.3" fill="#f2f3f7"/><rect x="91" y="0.0" width="7" height="7.3" fill="#edeef2"/><rect x="98" y="0.0" width="7" height="7.3" fill="#e4e5e9"/><rect x="105" y="0.0" width="7" height="7.3" fill="#e4e5e9"/><rect x="0" y="7.0" width="7" height="7.3" fill="#d8d8d8"/><rect x="7" y="7.0" width="7" height="7.3" fill="#d7d4d1"/><rect x="14" y="7.0" width="7" height="7.3" fill="#dedede"/><rect x="21" y="7.0" width="7" height="7.3" fill="#c4c1be"/><rect x="28" y="7.0" width="7" height="7.3" fill="#c5c3c1"/><rect x="35" y="7.0" width="7" height="7.3" fill="#bdbec2"/><rect x="42" y="7.0" width="7" height="7.3" fill="#b8bbbf"/><rect x="49" y="7.0" width="7" height="7.3" fill="#d7d8dc"/><rect x="56" y="7.0" width="7" height="7.3" fill="#dfdddb"/><rect x="63" y="7.0" width="7" height="7.3" fill="#bcbdc1"/><rect x="70" y="7.0" width="7" height="7.3" fill="#bebbb8"/><rect x="77" y="7.0" width="7" height="7.3" fill="#c1c4c8"/><rect x="84" y="7.0" width="7" height="7.3" fill="#bababa"/><rect x="91" y="7.0" width="7" height="7.3" fill="#dcdad8"/><rect x="98" y="7.0" width="7" height="7.3" fill="#dbdbdb"/><rect x="105" y="7.0" width="7" height="7.3" fill="#c0bebc"/><rect x="0" y="14.0" width="7" height="7.3" fill="#eaebef"/><rect x="7" y="14.0" width="7" height="7.3" fill="#f0f1f5"/><rect x="14" y="14.0" width="7" height="7.3" fill="#f5f2ef"/><rect x="21" y="14.0" width="7" height="7.3" fill="#eeecea"/><rect x="28" y="14.0" width="7" height="7.3" fill="#f0f1f5"/><rect x="35" y="14.0" width="7" height="7.3" fill="#eff0f4"/><rect x="42" y="14.0" width="7" height="7.3" fill="#e7e8ec"/><rect x="49" y="14.0" width="7" height="7.3" fill="#e8e9ed"/><rect x="56" y="14.0" width="7" height="7.3" fill="#eceae8"/><rect x="63" y="14.0" width="7" height="7.3" fill="#eae8e6"/><rect x="70" y="14.0" width="7" height="7.3" fill="#e9e7e5"/><rect x="77" y="14.0" width="7" height="7.3" fill="#edf0f4"/><rect x="84" y="14.0" width="7" height="7.3" fill="#e7e4e1"/><rect x="91" y="14.0" width="7" height="7.3" fill="#efefef"/><rect x="98" y="14.0" width="7" height="7.3" fill="#e5e8ec"/><rect x="105" y="14.0" width="7" height="7.3" fill="#e8e5e2"/></svg><svg class="a" style="left:1606px;top:328px" width="16" height="16" viewBox="0 0 16 16"><circle cx="8" cy="8" r="7.5" fill="#0dcaf0"/><text x="8" y="11.5" font-family="Liberation Sans" font-weight="bold" font-size="9" text-anchor="middle" fill="#000">J</text></svg><svg class="a" style="left:1626px;top:328px" width="23" height="16" viewBox="0 0 23 16"><rect width="23" height="16" rx="6" fill="#fd5a0b"/><path d="M11.5 2.3 L13.2 5.9 L17.1 6.3 L14.2 8.9 L15 12.8 L11.5 10.8 L8 12.8 L8.8 8.9 L5.9 6.3 L9.8 5.9Z" fill="#fff" stroke="#fff" stroke-width="0.8" stroke-linejoin="round"/></svg><div class="a" style="left:1653px;top:327px;font-size:14px;line-height:18px;color:#5c636a">(27 jr)</div><svg class="a" style="left:1474px;top:366px" width="16" height="16" viewBox="0 0 16 16"><rect width="16" height="16" rx="3.5" fill="#0d6efd"/><path d="M4 8.3 L6.8 11 L12 5.5" fill="none" stroke="#fff" stroke-width="2" stroke-linecap="round" stroke-linejoin="round"/></svg><div class="a" style="left:1498px;top:366px;font-size:14px;line-height:18px;color:#212529">Begeleiding gewenst</div>
<svg class="blur" style="left:53px;top:412px;width:84px;height:14px" viewBox="0 0 84 14.0"><rect x="0" y="0.0" width="7" height="7.3" fill="#babdc1"/><rect x="7" y="0.0" width="7" height="7.3" fill="#bebbb8"/><rect x="14" y="0.0" width="7" height="7.3" fill="#d3d3d3"/><rect x="21" y="0.0" width="7" height="7.3" fill="#c9c9c9"/><rect x="28" y="0.0" width="7" height="7.3" fill="#babdc1"/><rect x="35" y="0.0" width="7" height="7.3" fill="#bbbcc0"/><rect x="42" y="0.0" width="7" height="7.3" fill="#c6c6c6"/><rect x="49" y="0.0" width="7" height="7.3" fill="#c8c8c8"/><rect x="56" y="0.0" width="7" height="7.3" fill="#d5d5d5"/><rect x="63" y="0.0" width="7" height="7.3" fill="#cbccd0"/><rect x="70" y="0.0" width="7" height="7.3" fill="#cfd2d6"/><rect x="77" y="0.0" width="7" height="7.3" fill="#c0c0c0"/><rect x="0" y="7.0" width="7" height="7.3" fill="#f5f2ef"/><rect x="7" y="7.0" width="7" height="7.3" fill="#e8e5e2"/><rect x="14" y="7.0" width="7" height="7.3" fill="#eaeaea"/><rect x="21" y="7.0" width="7" height="7.3" fill="#eae7e4"/><rect x="28" y="7.0" width="7" height="7.3" fill="#e8ebef"/><rect x="35" y="7.0" width="7" height="7.3" fill="#f5f2ef"/><rect x="42" y="7.0" width="7" height="7.3" fill="#efedeb"/><rect x="49" y="7.0" width="7" height="7.3" fill="#f5f2ef"/><rect x="56" y="7.0" width="7" height="7.3" fill="#e7eaee"/><rect x="63" y="7.0" width="7" height="7.3" fill="#dfe2e6"/><rect x="70" y="7.0" width="7" height="7.3" fill="#e3e3e3"/><rect x="77" y="7.0" width="7" height="7.3" fill="#e0e1e5"/></svg>
<svg class="blur" style="left:53px;top:433px;width:35px;height:14px" viewBox="0 0 35 14.0"><rect x="0" y="0.0" width="7" height="7.3" fill="#f6f3f0"/><rect x="7" y="0.0" width="7" height="7.3" fill="#f6f4f2"/><rect x="14" y="0.0" width="7" height="7.3" fill="#edebe9"/><rect x="21" y="0.0" width="7" height="7.3" fill="#e9e7e5"/><rect x="28" y="0.0" width="7" height="7.3" fill="#eff0f4"/><rect x="0" y="7.0" width="7" height="7.3" fill="#eceae8"/><rect x="7" y="7.0" width="7" height="7.3" fill="#dbdee2"/><rect x="14" y="7.0" width="7" height="7.3" fill="#e7e4e1"/><rect x="21" y="7.0" width="7" height="7.3" fill="#d2d5d9"/><rect x="28" y="7.0" width="7" height="7.3" fill="#d7d4d1"/></svg>
<svg class="blur" style="left:214px;top:412px;width:210px;height:14px" viewBox="0 0 210 14.0"><rect x="0" y="0.0" width="7" height="7.3" fill="#8e9195"/><rect x="7" y="0.0" width="7" height="7.3" fill="#7e7b78"/><rect x="14" y="0.0" width="7" height="7.3" fill="#787878"/><rect x="21" y="0.0" width="7" height="7.3" fill="#9da0a4"/><rect x="28" y="0.0" width="7" height="7.3" fill="#969390"/><rect x="35" y="0.0" width="7" height="7.3" fill="#7b7b7b"/><rect x="42" y="0.0" width="7" height="7.3" fill="#a6a4a2"/><rect x="49" y="0.0" width="7" height="7.3" fill="#95989c"/><rect x="56" y="0.0" width="7" height="7.3" fill="#a19e9b"/><rect x="63" y="0.0" width="7" height="7.3" fill="#a1a4a8"/><rect x="70" y="0.0" width="7" height="7.3" fill="#7e7c7a"/><rect x="77" y="0.0" width="7" height="7.3" fill="#868380"/><rect x="84" y="0.0" width="7" height="7.3" fill="#8d8b89"/><rect x="91" y="0.0" width="7" height="7.3" fill="#75787c"/><rect x="98" y="0.0" width="7" height="7.3" fill="#8c8f93"/><rect x="105" y="0.0" width="7" height="7.3" fill="#989b9f"/><rect x="112" y="0.0" width="7" height="7.3" fill="#d5d5d5"/><rect x="119" y="0.0" width="7" height="7.3" fill="#e9ecf0"/><rect x="126" y="0.0" width="7" height="7.3" fill="#d1d4d8"/><rect x="133" y="0.0" width="7" height="7.3" fill="#d3d3d3"/><rect x="140" y="0.0" width="7" height="7.3" fill="#dcdad8"/><rect x="147" y="0.0" width="7" height="7.3" fill="#d4d2d0"/><rect x="154" y="0.0" width="7" height="7.3" fill="#d4d5d9"/><rect x="161" y="0.0" width="7" height="7.3" fill="#e5e2df"/><rect x="168" y="0.0" width="7" height="7.3" fill="#d3d4d8"/><rect x="175" y="0.0" width="7" height="7.3" fill="#e6e6e6"/><rect x="182" y="0.0" width="7" height="7.3" fill="#cdd0d4"/><rect x="189" y="0.0" width="7" height="7.3" fill="#e8e8e8"/><rect x="196" y="0.0" width="7" height="7.3" fill="#d6d4d2"/><rect x="203" y="0.0" width="7" height="7.3" fill="#e0e0e0"/><rect x="0" y="7.0" width="7" height="7.3" fill="#919191"/><rect x="7" y="7.0" width="7" height="7.3" fill="#888b8f"/><rect x="14" y="7.0" width="7" height="7.3" fill="#a3a09d"/><rect x="21" y="7.0" width="7" height="7.3" fill="#7b7c80"/><rect x="28" y="7.0" width="7" height="7.3" fill="#9c9996"/><rect x="35" y="7.0" width="7" height="7.3" fill="#a0a1a5"/><rect x="42" y="7.0" width="7" height="7.3" fill="#8d9094"/><rect x="49" y="7.0" width="7" height="7.3" fill="#aaa8a6"/><rect x="56" y="7.0" width="7" height="7.3" fill="#7e8185"/><rect x="63" y="7.0" width="7" height="7.3" fill="#a4a5a9"/><rect x="70" y="7.0" width="7" height="7.3" fill="#a4a19e"/><rect x="77" y="7.0" width="7" height="7.3" fill="#78797d"/><rect x="84" y="7.0" width="7" height="7.3" fill="#a4a2a0"/><rect x="91" y="7.0" width="7" height="7.3" fill="#a4a5a9"/><rect x="98" y="7.0" width="7" height="7.3" fill="#7e7f83"/><rect x="105" y="7.0" width="7" height="7.3" fill="#96979b"/><rect x="112" y="7.0" width="7" height="7.3" fill="#e0e1e5"/><rect x="119" y="7.0" width="7" height="7.3" fill="#f9f6f3"/><rect x="126" y="7.0" width="7" height="7.3" fill="#e4e4e4"/><rect x="133" y="7.0" width="7" height="7.3" fill="#e6e3e0"/><rect x="140" y="7.0" width="7" height="7.3" fill="#f3f6fa"/><rect x="147" y="7.0" width="7" height="7.3" fill="#e9e7e5"/><rect x="154" y="7.0" width="7" height="7.3" fill="#eeeff3"/><rect x="161" y="7.0" width="7" height="7.3" fill="#e3e3e3"/><rect x="168" y="7.0" width="7" height="7.3" fill="#f4f5f9"/><rect x="175" y="7.0" width="7" height="7.3" fill="#edebe9"/><rect x="182" y="7.0" width="7" height="7.3" fill="#eaeaea"/><rect x="189" y="7.0" width="7" height="7.3" fill="#f0f0f0"/><rect x="196" y="7.0" width="7" height="7.3" fill="#f0f1f5"/><rect x="203" y="7.0" width="7" height="7.3" fill="#e2e3e7"/></svg>
<svg class="blur" style="left:214px;top:433px;width:56px;height:14px" viewBox="0 0 56 14.0"><rect x="0" y="0.0" width="7" height="7.3" fill="#d4d2d0"/><rect x="7" y="0.0" width="7" height="7.3" fill="#d6d6d6"/><rect x="14" y="0.0" width="7" height="7.3" fill="#e6e9ed"/><rect x="21" y="0.0" width="7" height="7.3" fill="#d8d5d2"/><rect x="28" y="0.0" width="7" height="7.3" fill="#d9d7d5"/><rect x="35" y="0.0" width="7" height="7.3" fill="#e1dfdd"/><rect x="42" y="0.0" width="7" height="7.3" fill="#d4d2d0"/><rect x="49" y="0.0" width="7" height="7.3" fill="#e8ebef"/><rect x="0" y="7.0" width="7" height="7.3" fill="#b8b9bd"/><rect x="7" y="7.0" width="7" height="7.3" fill="#c4c4c4"/><rect x="14" y="7.0" width="7" height="7.3" fill="#e1dedb"/><rect x="21" y="7.0" width="7" height="7.3" fill="#cacdd1"/><rect x="28" y="7.0" width="7" height="7.3" fill="#c9cace"/><rect x="35" y="7.0" width="7" height="7.3" fill="#dfdcd9"/><rect x="42" y="7.0" width="7" height="7.3" fill="#bcbab8"/><rect x="49" y="7.0" width="7" height="7.3" fill="#bfbdbb"/></svg>
<svg class="a" style="left:513px;top:405px" width="25" height="19" viewBox="0 0 25 19"><rect width="25" height="19" rx="6" fill="#198754"/><circle cx="12.5" cy="9.3" r="6" fill="#fff"/><path d="M12 6.3 V9.6 L13.9 11" fill="none" stroke="#7fb89a" stroke-width="0.6"/></svg>
<div class="a tn" style="left:546px;top:408px;letter-spacing:0">Wedstrijdtafel</div>
<div class="a loc" style="left:546px;top:433px;letter-spacing:-0.2px">Locatie:</div>
<svg class="blur" style="left:596px;top:435px;width:126px;height:14px" viewBox="0 0 126 14.0"><rect x="0" y="0.0" width="7" height="7.3" fill="#eaeaea"/><rect x="7" y="0.0" width="7" height="7.3" fill="#eceae8"/><rect x="14" y="0.0" width="7" height="7.3" fill="#e9eaee"/><rect x="21" y="0.0" width="7" height="7.3" fill="#efedeb"/><rect x="28" y="0.0" width="7" height="7.3" fill="#f4f2f0"/><rect x="35" y="0.0" width="7" height="7.3" fill="#e3e4e8"/><rect x="42" y="0.0" width="7" height="7.3" fill="#e5e8ec"/><rect x="49" y="0.0" width="7" height="7.3" fill="#e8e6e4"/><rect x="56" y="0.0" width="7" height="7.3" fill="#dfe2e6"/><rect x="63" y="0.0" width="7" height="7.3" fill="#f0f0f0"/><rect x="70" y="0.0" width="7" height="7.3" fill="#f6f4f2"/><rect x="77" y="0.0" width="7" height="7.3" fill="#eeecea"/><rect x="84" y="0.0" width="7" height="7.3" fill="#ebe8e5"/><rect x="91" y="0.0" width="7" height="7.3" fill="#e2e3e7"/><rect x="98" y="0.0" width="7" height="7.3" fill="#e7e4e1"/><rect x="105" y="0.0" width="7" height="7.3" fill="#eff2f6"/><rect x="112" y="0.0" width="7" height="7.3" fill="#f0edea"/><rect x="119" y="0.0" width="7" height="7.3" fill="#f3f4f8"/><rect x="0" y="7.0" width="7" height="7.3" fill="#d6d6d6"/><rect x="7" y="7.0" width="7" height="7.3" fill="#e1e4e8"/><rect x="14" y="7.0" width="7" height="7.3" fill="#d9d7d5"/><rect x="21" y="7.0" width="7" height="7.3" fill="#eeecea"/><rect x="28" y="7.0" width="7" height="7.3" fill="#dadada"/><rect x="35" y="7.0" width="7" height="7.3" fill="#d3d3d3"/><rect x="42" y="7.0" width="7" height="7.3" fill="#f0eeec"/><rect x="49" y="7.0" width="7" height="7.3" fill="#e7e5e3"/><rect x="56" y="7.0" width="7" height="7.3" fill="#d7dade"/><rect x="63" y="7.0" width="7" height="7.3" fill="#e8e5e2"/><rect x="70" y="7.0" width="7" height="7.3" fill="#d8dbdf"/><rect x="77" y="7.0" width="7" height="7.3" fill="#d7dade"/><rect x="84" y="7.0" width="7" height="7.3" fill="#ced1d5"/><rect x="91" y="7.0" width="7" height="7.3" fill="#cbced2"/><rect x="98" y="7.0" width="7" height="7.3" fill="#e3e6ea"/><rect x="105" y="7.0" width="7" height="7.3" fill="#eceae8"/><rect x="112" y="7.0" width="7" height="7.3" fill="#d4d1ce"/><rect x="119" y="7.0" width="7" height="7.3" fill="#e4e4e4"/></svg>
<div class="a" style="left:797px;top:419px;width:14px;height:1px;background:#3d4246"></div>
<div class="a td" style="left:897px;top:408px">1</div>
<div class="a td" style="left:1026px;top:408px">12 jaar</div>
<div class="a" style="left:1193px;top:418px;width:4px;height:1px;background:#212529"></div>
<svg class="a" style="left:1393px;top:409px" width="17" height="17" viewBox="0 0 17 17"><circle cx="8.5" cy="8.5" r="8.3" fill="#dc3545"/><rect x="7.5" y="3.8" width="2" height="6" rx="1" fill="#fff"/><circle cx="8.5" cy="12.3" r="1.1" fill="#fff"/></svg>
<div class="sel" style="top:405px"></div><svg class="a" style="left:1826px;top:420px" width="12" height="8" viewBox="0 0 12 8"><path d="M1 1 L6.0 7.0 L11 1" fill="none" stroke="#343a40" stroke-width="1.6" stroke-linecap="round" stroke-linejoin="round"/></svg><div class="a td" style="left:1488px;top:416px;color:#212529">- Geen toewijzing -</div>
<svg class="blur" style="left:51px;top:477px;width:84px;height:21px" viewBox="0 0 84 21.0"><rect x="0" y="0.0" width="7" height="7.3" fill="#e8ebef"/><rect x="7" y="0.0" width="7" height="7.3" fill="#ededed"/><rect x="14" y="0.0" width="7" height="7.3" fill="#f2f0ee"/><rect x="21" y="0.0" width="7" height="7.3" fill="#f4f4f4"/><rect x="28" y="0.0" width="7" height="7.3" fill="#f1efed"/><rect x="35" y="0.0" width="7" height="7.3" fill="#eaeaea"/><rect x="49" y="0.0" width="7" height="7.3" fill="#eaeaea"/><rect x="56" y="0.0" width="7" height="7.3" fill="#e0e3e7"/><rect x="63" y="0.0" width="7" height="7.3" fill="#f9f6f3"/><rect x="70" y="0.0" width="7" height="7.3" fill="#e6e9ed"/><rect x="77" y="0.0" width="7" height="7.3" fill="#edeef2"/><rect x="0" y="7.0" width="7" height="7.3" fill="#cfccc9"/><rect x="7" y="7.0" width="7" height="7.3" fill="#d3d1cf"/><rect x="14" y="7.0" width="7" height="7.3" fill="#bdbbb9"/><rect x="21" y="7.0" width="7" height="7.3" fill="#d9dade"/><rect x="28" y="7.0" width="7" height="7.3" fill="#c5c5c5"/><rect x="35" y="7.0" width="7" height="7.3" fill="#bfbdbb"/><rect x="49" y="7.0" width="7" height="7.3" fill="#d2d3d7"/><rect x="56" y="7.0" width="7" height="7.3" fill="#bdc0c4"/><rect x="63" y="7.0" width="7" height="7.3" fill="#d7d7d7"/><rect x="70" y="7.0" width="7" height="7.3" fill="#dedbd8"/><rect x="77" y="7.0" width="7" height="7.3" fill="#c6c4c2"/><rect x="0" y="14.0" width="7" height="7.3" fill="#eceff3"/><rect x="7" y="14.0" width="7" height="7.3" fill="#e8ebef"/><rect x="14" y="14.0" width="7" height="7.3" fill="#e7eaee"/><rect x="21" y="14.0" width="7" height="7.3" fill="#f1eeeb"/><rect x="28" y="14.0" width="7" height="7.3" fill="#efedeb"/><rect x="35" y="14.0" width="7" height="7.3" fill="#f7f5f3"/><rect x="49" y="14.0" width="7" height="7.3" fill="#e8e5e2"/><rect x="56" y="14.0" width="7" height="7.3" fill="#f9f6f3"/><rect x="63" y="14.0" width="7" height="7.3" fill="#e7e4e1"/><rect x="70" y="14.0" width="7" height="7.3" fill="#f6f4f2"/><rect x="77" y="14.0" width="7" height="7.3" fill="#f6f3f0"/></svg>
<svg class="blur" style="left:51px;top:505px;width:35px;height:14px" viewBox="0 0 35 14.0"><rect x="0" y="0.0" width="7" height="7.3" fill="#d1d4d8"/><rect x="7" y="0.0" width="7" height="7.3" fill="#d8d6d4"/><rect x="14" y="0.0" width="7" height="7.3" fill="#bebfc3"/><rect x="21" y="0.0" width="7" height="7.3" fill="#c7c4c1"/><rect x="28" y="0.0" width="7" height="7.3" fill="#c0bdba"/><rect x="0" y="7.0" width="7" height="7.3" fill="#eaebef"/><rect x="7" y="7.0" width="7" height="7.3" fill="#e1e4e8"/><rect x="14" y="7.0" width="7" height="7.3" fill="#e6e9ed"/><rect x="21" y="7.0" width="7" height="7.3" fill="#e8e9ed"/><rect x="28" y="7.0" width="7" height="7.3" fill="#e8e8e8"/></svg>
<div class="a" style="left:213px;top:487px;width:16px;height:1px;background:#495057"></div>
<svg class="a" style="left:513px;top:474px" width="25" height="19" viewBox="0 0 25 19"><rect width="25" height="19" rx="6" fill="#fe6708"/><path d="M5.2 5.3 Q5.2 3.9 6.6 3.9 H15.2 L15.9 5.5 L18.3 6.3 L19.8 8.3 V13.6 H5.2Z" fill="#fff"/><circle cx="9.4" cy="13.8" r="2.1" fill="#fff"/><circle cx="15.6" cy="13.8" r="2.1" fill="#fff"/><circle cx="9.4" cy="13.4" r="0.75" fill="#fe6708"/><circle cx="15.6" cy="13.4" r="0.75" fill="#fe6708"/><path d="M16.2 8 L17.6 9 L16.2 9.6Z" fill="#fe9a50"/></svg>
<div class="a tn" style="left:546px;top:477px;letter-spacing:0">Oud-papier ophalen</div>
<div class="a loc" style="left:546px;top:502px;letter-spacing:-0.2px">Locatie:</div>
<svg class="blur" style="left:596px;top:504px;width:126px;height:14px" viewBox="0 0 126 14.0"><rect x="0" y="0.0" width="7" height="7.3" fill="#e9eaee"/><rect x="7" y="0.0" width="7" height="7.3" fill="#e7e4e1"/><rect x="14" y="0.0" width="7" height="7.3" fill="#f4f1ee"/><rect x="21" y="0.0" width="7" height="7.3" fill="#eeebe8"/><rect x="28" y="0.0" width="7" height="7.3" fill="#edebe9"/><rect x="35" y="0.0" width="7" height="7.3" fill="#e6e9ed"/><rect x="42" y="0.0" width="7" height="7.3" fill="#ebebeb"/><rect x="49" y="0.0" width="7" height="7.3" fill="#f9f7f5"/><rect x="56" y="0.0" width="7" height="7.3" fill="#f8f5f2"/><rect x="63" y="0.0" width="7" height="7.3" fill="#edebe9"/><rect x="70" y="0.0" width="7" height="7.3" fill="#efefef"/><rect x="77" y="0.0" width="7" height="7.3" fill="#f8f5f2"/><rect x="84" y="0.0" width="7" height="7.3" fill="#eeeeee"/><rect x="91" y="0.0" width="7" height="7.3" fill="#e8e8e8"/><rect x="98" y="0.0" width="7" height="7.3" fill="#f8f5f2"/><rect x="105" y="0.0" width="7" height="7.3" fill="#efefef"/><rect x="112" y="0.0" width="7" height="7.3" fill="#e6e3e0"/><rect x="119" y="0.0" width="7" height="7.3" fill="#f2f0ee"/><rect x="0" y="7.0" width="7" height="7.3" fill="#e7eaee"/><rect x="7" y="7.0" width="7" height="7.3" fill="#e5e5e5"/><rect x="14" y="7.0" width="7" height="7.3" fill="#d3d0cd"/><rect x="21" y="7.0" width="7" height="7.3" fill="#dbd8d5"/><rect x="28" y="7.0" width="7" height="7.3" fill="#d1d2d6"/><rect x="35" y="7.0" width="7" height="7.3" fill="#e9e7e5"/><rect x="42" y="7.0" width="7" height="7.3" fill="#cccfd3"/><rect x="49" y="7.0" width="7" height="7.3" fill="#e7e5e3"/><rect x="56" y="7.0" width="7" height="7.3" fill="#e5e8ec"/><rect x="63" y="7.0" width="7" height="7.3" fill="#dcdad8"/><rect x="70" y="7.0" width="7" height="7.3" fill="#d3d3d3"/><rect x="77" y="7.0" width="7" height="7.3" fill="#cecece"/><rect x="84" y="7.0" width="7" height="7.3" fill="#d6d6d6"/><rect x="91" y="7.0" width="7" height="7.3" fill="#dddbd9"/><rect x="98" y="7.0" width="7" height="7.3" fill="#ececec"/><rect x="105" y="7.0" width="7" height="7.3" fill="#e2dfdc"/><rect x="112" y="7.0" width="7" height="7.3" fill="#d7dade"/><rect x="119" y="7.0" width="7" height="7.3" fill="#e3e6ea"/></svg>
<div class="a td" style="left:797px;top:477px">± 3 uur</div>
<div class="a td" style="left:897px;top:477px">2</div>
<div class="a td" style="left:1026px;top:477px">18 jaar</div>
<div class="a" style="left:1193px;top:487px;width:4px;height:1px;background:#212529"></div>
<svg class="a" style="left:1394px;top:480px" width="15" height="14" viewBox="0 0 15 14"><path d="M1.2 7.8 L5.3 12 L13.8 1.5" fill="none" stroke="#198754" stroke-width="1.9" stroke-linecap="round" stroke-linejoin="round"/></svg>
<div class="sel" style="top:474px"></div><svg class="a" style="left:1826px;top:489px" width="12" height="8" viewBox="0 0 12 8"><path d="M1 1 L6.0 7.0 L11 1" fill="none" stroke="#343a40" stroke-width="1.6" stroke-linecap="round" stroke-linejoin="round"/></svg><svg class="blur" style="left:1486px;top:484px;width:126px;height:20px" viewBox="0 0 126 20.0"><rect x="0" y="0.0" width="7" height="7.0" fill="#f3f1ef"/><rect x="7" y="0.0" width="7" height="7.0" fill="#edeef2"/><rect x="14" y="0.0" width="7" height="7.0" fill="#eceae8"/><rect x="21" y="0.0" width="7" height="7.0" fill="#e7eaee"/><rect x="28" y="0.0" width="7" height="7.0" fill="#e7e5e3"/><rect x="35" y="0.0" width="7" height="7.0" fill="#e8e9ed"/><rect x="42" y="0.0" width="7" height="7.0" fill="#f0edea"/><rect x="49" y="0.0" width="7" height="7.0" fill="#f0f1f5"/><rect x="56" y="0.0" width="7" height="7.0" fill="#f9f6f3"/><rect x="63" y="0.0" width="7" height="7.0" fill="#e1e4e8"/><rect x="70" y="0.0" width="7" height="7.0" fill="#edebe9"/><rect x="77" y="0.0" width="7" height="7.0" fill="#f2f0ee"/><rect x="84" y="0.0" width="7" height="7.0" fill="#eceff3"/><rect x="91" y="0.0" width="7" height="7.0" fill="#e5e2df"/><rect x="98" y="0.0" width="7" height="7.0" fill="#e7e5e3"/><rect x="105" y="0.0" width="7" height="7.0" fill="#eff0f4"/><rect x="112" y="0.0" width="7" height="7.0" fill="#f1f1f1"/><rect x="119" y="0.0" width="7" height="7.0" fill="#e8e6e4"/><rect x="0" y="6.7" width="7" height="7.0" fill="#dddbd9"/><rect x="7" y="6.7" width="7" height="7.0" fill="#d7d4d1"/><rect x="14" y="6.7" width="7" height="7.0" fill="#c1bebb"/><rect x="21" y="6.7" width="7" height="7.0" fill="#c4c1be"/><rect x="28" y="6.7" width="7" height="7.0" fill="#d9d9d9"/><rect x="35" y="6.7" width="7" height="7.0" fill="#d5d5d5"/><rect x="42" y="6.7" width="7" height="7.0" fill="#dbdbdb"/><rect x="49" y="6.7" width="7" height="7.0" fill="#bbb8b5"/><rect x="56" y="6.7" width="7" height="7.0" fill="#c4c5c9"/><rect x="63" y="6.7" width="7" height="7.0" fill="#b7babe"/><rect x="70" y="6.7" width="7" height="7.0" fill="#bdc0c4"/><rect x="77" y="6.7" width="7" height="7.0" fill="#dddbd9"/><rect x="84" y="6.7" width="7" height="7.0" fill="#bfbfbf"/><rect x="91" y="6.7" width="7" height="7.0" fill="#b9bcc0"/><rect x="98" y="6.7" width="7" height="7.0" fill="#d7d8dc"/><rect x="105" y="6.7" width="7" height="7.0" fill="#c8c6c4"/><rect x="112" y="6.7" width="7" height="7.0" fill="#cbc8c5"/><rect x="119" y="6.7" width="7" height="7.0" fill="#dedede"/><rect x="0" y="13.3" width="7" height="7.0" fill="#e0e1e5"/><rect x="7" y="13.3" width="7" height="7.0" fill="#efedeb"/><rect x="14" y="13.3" width="7" height="7.0" fill="#e7eaee"/><rect x="21" y="13.3" width="7" height="7.0" fill="#f9f6f3"/><rect x="28" y="13.3" width="7" height="7.0" fill="#eff0f4"/><rect x="35" y="13.3" width="7" height="7.0" fill="#e7e8ec"/><rect x="42" y="13.3" width="7" height="7.0" fill="#e9e9e9"/><rect x="49" y="13.3" width="7" height="7.0" fill="#eceff3"/><rect x="56" y="13.3" width="7" height="7.0" fill="#e3e3e3"/><rect x="63" y="13.3" width="7" height="7.0" fill="#eceae8"/><rect x="70" y="13.3" width="7" height="7.0" fill="#faf8f6"/><rect x="77" y="13.3" width="7" height="7.0" fill="#e1e4e8"/><rect x="84" y="13.3" width="7" height="7.0" fill="#edebe9"/><rect x="91" y="13.3" width="7" height="7.0" fill="#f0edea"/><rect x="98" y="13.3" width="7" height="7.0" fill="#f1f1f1"/><rect x="105" y="13.3" width="7" height="7.0" fill="#f0eeec"/><rect x="112" y="13.3" width="7" height="7.0" fill="#f1efed"/><rect x="119" y="13.3" width="7" height="7.0" fill="#e8e8e8"/></svg><div class="a" style="left:1614px;top:486px;font-size:14px;line-height:18px;color:#5c636a">(19 jr)</div>
<svg class="blur" style="left:51px;top:549px;width:84px;height:14px" viewBox="0 0 84 14.0"><rect x="0" y="0.0" width="7" height="7.3" fill="#d3d3d3"/><rect x="7" y="0.0" width="7" height="7.3" fill="#bfbdbb"/><rect x="14" y="0.0" width="7" height="7.3" fill="#c1c4c8"/><rect x="21" y="0.0" width="7" height="7.3" fill="#dedcda"/><rect x="28" y="0.0" width="7" height="7.3" fill="#c1c4c8"/><rect x="35" y="0.0" width="7" height="7.3" fill="#d3d1cf"/><rect x="49" y="0.0" width="7" height="7.3" fill="#bdbbb9"/><rect x="56" y="0.0" width="7" height="7.3" fill="#cbc9c7"/><rect x="63" y="0.0" width="7" height="7.3" fill="#bebcba"/><rect x="70" y="0.0" width="7" height="7.3" fill="#bebcba"/><rect x="77" y="0.0" width="7" height="7.3" fill="#bcbcbc"/><rect x="0" y="7.0" width="7" height="7.3" fill="#cbc8c5"/><rect x="7" y="7.0" width="7" height="7.3" fill="#babbbf"/><rect x="14" y="7.0" width="7" height="7.3" fill="#cacdd1"/><rect x="21" y="7.0" width="7" height="7.3" fill="#c6c9cd"/><rect x="28" y="7.0" width="7" height="7.3" fill="#b7babe"/><rect x="35" y="7.0" width="7" height="7.3" fill="#c9ccd0"/><rect x="49" y="7.0" width="7" height="7.3" fill="#cbcbcb"/><rect x="56" y="7.0" width="7" height="7.3" fill="#dedede"/><rect x="63" y="7.0" width="7" height="7.3" fill="#bcb9b6"/><rect x="70" y="7.0" width="7" height="7.3" fill="#c2c0be"/><rect x="77" y="7.0" width="7" height="7.3" fill="#d9d7d5"/></svg>
<svg class="blur" style="left:51px;top:569px;width:35px;height:21px" viewBox="0 0 35 21.0"><rect x="0" y="0.0" width="7" height="7.3" fill="#eeecea"/><rect x="7" y="0.0" width="7" height="7.3" fill="#f4f1ee"/><rect x="14" y="0.0" width="7" height="7.3" fill="#f4f1ee"/><rect x="21" y="0.0" width="7" height="7.3" fill="#dfe2e6"/><rect x="28" y="0.0" width="7" height="7.3" fill="#e4e5e9"/><rect x="0" y="7.0" width="7" height="7.3" fill="#c4c7cb"/><rect x="7" y="7.0" width="7" height="7.3" fill="#d0cecc"/><rect x="14" y="7.0" width="7" height="7.3" fill="#cdced2"/><rect x="21" y="7.0" width="7" height="7.3" fill="#bbbcc0"/><rect x="28" y="7.0" width="7" height="7.3" fill="#c8c6c4"/><rect x="0" y="14.0" width="7" height="7.3" fill="#eae7e4"/><rect x="7" y="14.0" width="7" height="7.3" fill="#efefef"/><rect x="14" y="14.0" width="7" height="7.3" fill="#f6f6f6"/><rect x="21" y="14.0" width="7" height="7.3" fill="#eff0f4"/><rect x="28" y="14.0" width="7" height="7.3" fill="#f0f3f7"/></svg>
<div class="a" style="left:213px;top:556px;width:16px;height:1px;background:#495057"></div>
<svg class="a" style="left:513px;top:543px" width="25" height="19" viewBox="0 0 25 19"><rect width="25" height="19" rx="6" fill="#fe6708"/><path d="M5.2 5.3 Q5.2 3.9 6.6 3.9 H15.2 L15.9 5.5 L18.3 6.3 L19.8 8.3 V13.6 H5.2Z" fill="#fff"/><circle cx="9.4" cy="13.8" r="2.1" fill="#fff"/><circle cx="15.6" cy="13.8" r="2.1" fill="#fff"/><circle cx="9.4" cy="13.4" r="0.75" fill="#fe6708"/><circle cx="15.6" cy="13.4" r="0.75" fill="#fe6708"/><path d="M16.2 8 L17.6 9 L16.2 9.6Z" fill="#fe9a50"/></svg>
<div class="a tn" style="left:546px;top:546px;letter-spacing:0">Oud-papier ophalen</div>
<div class="a loc" style="left:546px;top:571px;letter-spacing:-0.2px">Locatie:</div>
<svg class="blur" style="left:596px;top:573px;width:126px;height:14px" viewBox="0 0 126 14.0"><rect x="0" y="0.0" width="7" height="7.3" fill="#efedeb"/><rect x="7" y="0.0" width="7" height="7.3" fill="#e0e3e7"/><rect x="14" y="0.0" width="7" height="7.3" fill="#f1f4f8"/><rect x="21" y="0.0" width="7" height="7.3" fill="#f3f1ef"/><rect x="28" y="0.0" width="7" height="7.3" fill="#dfe2e6"/><rect x="35" y="0.0" width="7" height="7.3" fill="#f9f6f3"/><rect x="42" y="0.0" width="7" height="7.3" fill="#f2f0ee"/><rect x="49" y="0.0" width="7" height="7.3" fill="#e8e8e8"/><rect x="56" y="0.0" width="7" height="7.3" fill="#f2efec"/><rect x="63" y="0.0" width="7" height="7.3" fill="#efefef"/><rect x="70" y="0.0" width="7" height="7.3" fill="#e8e6e4"/><rect x="77" y="0.0" width="7" height="7.3" fill="#f1f4f8"/><rect x="84" y="0.0" width="7" height="7.3" fill="#f3f0ed"/><rect x="91" y="0.0" width="7" height="7.3" fill="#e6e6e6"/><rect x="98" y="0.0" width="7" height="7.3" fill="#e1e2e6"/><rect x="105" y="0.0" width="7" height="7.3" fill="#eae8e6"/><rect x="112" y="0.0" width="7" height="7.3" fill="#e2e3e7"/><rect x="119" y="0.0" width="7" height="7.3" fill="#f2f5f9"/><rect x="0" y="7.0" width="7" height="7.3" fill="#e3e4e8"/><rect x="7" y="7.0" width="7" height="7.3" fill="#d6d3d0"/><rect x="14" y="7.0" width="7" height="7.3" fill="#d6d9dd"/><rect x="21" y="7.0" width="7" height="7.3" fill="#d1d2d6"/><rect x="28" y="7.0" width="7" height="7.3" fill="#d3d3d3"/><rect x="35" y="7.0" width="7" height="7.3" fill="#d5d3d1"/><rect x="42" y="7.0" width="7" height="7.3" fill="#e0ddda"/><rect x="49" y="7.0" width="7" height="7.3" fill="#dad7d4"/><rect x="56" y="7.0" width="7" height="7.3" fill="#e8e8e8"/><rect x="63" y="7.0" width="7" height="7.3" fill="#efedeb"/><rect x="70" y="7.0" width="7" height="7.3" fill="#d8d8d8"/><rect x="77" y="7.0" width="7" height="7.3" fill="#e5e3e1"/><rect x="84" y="7.0" width="7" height="7.3" fill="#cecfd3"/><rect x="91" y="7.0" width="7" height="7.3" fill="#e7e4e1"/><rect x="98" y="7.0" width="7" height="7.3" fill="#e5e2df"/><rect x="105" y="7.0" width="7" height="7.3" fill="#e5e3e1"/><rect x="112" y="7.0" width="7" height="7.3" fill="#e4e1de"/><rect x="119" y="7.0" width="7" height="7.3" fill="#eceae8"/></svg>
<div class="a td" style="left:797px;top:546px">± 3 uur</div>
<div class="a td" style="left:897px;top:546px">2</div>
<div class="a td" style="left:1026px;top:546px">18 jaar</div>
<div class="a" style="left:1193px;top:556px;width:4px;height:1px;background:#212529"></div>
<svg class="a" style="left:1394px;top:549px" width="15" height="14" viewBox="0 0 15 14"><path d="M1.2 7.8 L5.3 12 L13.8 1.5" fill="none" stroke="#198754" stroke-width="1.9" stroke-linecap="round" stroke-linejoin="round"/></svg>
<div class="sel" style="top:543px"></div><svg class="a" style="left:1826px;top:558px" width="12" height="8" viewBox="0 0 12 8"><path d="M1 1 L6.0 7.0 L11 1" fill="none" stroke="#343a40" stroke-width="1.6" stroke-linecap="round" stroke-linejoin="round"/></svg><svg class="blur" style="left:1486px;top:555px;width:133px;height:20px" viewBox="0 0 133 20.0"><rect x="0" y="0.0" width="7" height="7.0" fill="#ebe9e7"/><rect x="7" y="0.0" width="7" height="7.0" fill="#e5e5e5"/><rect x="14" y="0.0" width="7" height="7.0" fill="#e8e9ed"/><rect x="21" y="0.0" width="7" height="7.0" fill="#e7e4e1"/><rect x="28" y="0.0" width="7" height="7.0" fill="#e9e7e5"/><rect x="35" y="0.0" width="7" height="7.0" fill="#f5f3f1"/><rect x="42" y="0.0" width="7" height="7.0" fill="#eae7e4"/><rect x="49" y="0.0" width="7" height="7.0" fill="#eae8e6"/><rect x="56" y="0.0" width="7" height="7.0" fill="#eeeff3"/><rect x="63" y="0.0" width="7" height="7.0" fill="#e7e8ec"/><rect x="70" y="0.0" width="7" height="7.0" fill="#e2e5e9"/><rect x="77" y="0.0" width="7" height="7.0" fill="#e8ebef"/><rect x="84" y="0.0" width="7" height="7.0" fill="#f1f4f8"/><rect x="91" y="0.0" width="7" height="7.0" fill="#eaedf1"/><rect x="98" y="0.0" width="7" height="7.0" fill="#edeae7"/><rect x="105" y="0.0" width="7" height="7.0" fill="#f3f0ed"/><rect x="112" y="0.0" width="7" height="7.0" fill="#eae7e4"/><rect x="119" y="0.0" width="7" height="7.0" fill="#ece9e6"/><rect x="126" y="0.0" width="7" height="7.0" fill="#e9eaee"/><rect x="0" y="6.7" width="7" height="7.0" fill="#c1c4c8"/><rect x="7" y="6.7" width="7" height="7.0" fill="#c0bebc"/><rect x="14" y="6.7" width="7" height="7.0" fill="#cbc8c5"/><rect x="21" y="6.7" width="7" height="7.0" fill="#d6d7db"/><rect x="28" y="6.7" width="7" height="7.0" fill="#c6c6c6"/><rect x="35" y="6.7" width="7" height="7.0" fill="#d5d5d5"/><rect x="42" y="6.7" width="7" height="7.0" fill="#bebebe"/><rect x="49" y="6.7" width="7" height="7.0" fill="#d9d6d3"/><rect x="56" y="6.7" width="7" height="7.0" fill="#d1d4d8"/><rect x="63" y="6.7" width="7" height="7.0" fill="#b7babe"/><rect x="70" y="6.7" width="7" height="7.0" fill="#c6c6c6"/><rect x="77" y="6.7" width="7" height="7.0" fill="#bebbb8"/><rect x="84" y="6.7" width="7" height="7.0" fill="#dcdde1"/><rect x="91" y="6.7" width="7" height="7.0" fill="#c4c4c4"/><rect x="98" y="6.7" width="7" height="7.0" fill="#cdced2"/><rect x="105" y="6.7" width="7" height="7.0" fill="#c7c5c3"/><rect x="112" y="6.7" width="7" height="7.0" fill="#dbdee2"/><rect x="119" y="6.7" width="7" height="7.0" fill="#b8b8b8"/><rect x="126" y="6.7" width="7" height="7.0" fill="#dcdde1"/><rect x="0" y="13.3" width="7" height="7.0" fill="#f0edea"/><rect x="7" y="13.3" width="7" height="7.0" fill="#e0e3e7"/><rect x="14" y="13.3" width="7" height="7.0" fill="#efece9"/><rect x="21" y="13.3" width="7" height="7.0" fill="#e6e3e0"/><rect x="28" y="13.3" width="7" height="7.0" fill="#eaeaea"/><rect x="35" y="13.3" width="7" height="7.0" fill="#f8f5f2"/><rect x="42" y="13.3" width="7" height="7.0" fill="#dfe2e6"/><rect x="49" y="13.3" width="7" height="7.0" fill="#eceff3"/><rect x="56" y="13.3" width="7" height="7.0" fill="#e5e6ea"/><rect x="63" y="13.3" width="7" height="7.0" fill="#ebebeb"/><rect x="70" y="13.3" width="7" height="7.0" fill="#e8e8e8"/><rect x="77" y="13.3" width="7" height="7.0" fill="#eff0f4"/><rect x="84" y="13.3" width="7" height="7.0" fill="#f1f1f1"/><rect x="91" y="13.3" width="7" height="7.0" fill="#efefef"/><rect x="98" y="13.3" width="7" height="7.0" fill="#ecedf1"/><rect x="105" y="13.3" width="7" height="7.0" fill="#e4e5e9"/><rect x="112" y="13.3" width="7" height="7.0" fill="#e7e4e1"/><rect x="119" y="13.3" width="7" height="7.0" fill="#ebeef2"/><rect x="126" y="13.3" width="7" height="7.0" fill="#eceff3"/></svg><svg class="a" style="left:1627px;top:555px" width="23" height="16" viewBox="0 0 23 16"><rect width="23" height="16" rx="6" fill="#fd5a0b"/><path d="M11.5 2.3 L13.2 5.9 L17.1 6.3 L14.2 8.9 L15 12.8 L11.5 10.8 L8 12.8 L8.8 8.9 L5.9 6.3 L9.8 5.9Z" fill="#fff" stroke="#fff" stroke-width="0.8" stroke-linejoin="round"/></svg><div class="a" style="left:1654px;top:555px;font-size:14px;line-height:18px;color:#5c636a">(23 jr)</div>
<svg class="blur" style="left:49px;top:617px;width:91px;height:14px" viewBox="0 0 91 14.0"><rect x="0" y="0.0" width="7" height="7.3" fill="#d1d2d6"/><rect x="7" y="0.0" width="7" height="7.3" fill="#d4d4d4"/><rect x="14" y="0.0" width="7" height="7.3" fill="#d8d9dd"/><rect x="21" y="0.0" width="7" height="7.3" fill="#d7d5d3"/><rect x="28" y="0.0" width="7" height="7.3" fill="#d9d9d9"/><rect x="35" y="0.0" width="7" height="7.3" fill="#d5d2cf"/><rect x="42" y="0.0" width="7" height="7.3" fill="#e8e5e2"/><rect x="49" y="0.0" width="7" height="7.3" fill="#cdced2"/><rect x="56" y="0.0" width="7" height="7.3" fill="#e8e8e8"/><rect x="63" y="0.0" width="7" height="7.3" fill="#e0e3e7"/><rect x="70" y="0.0" width="7" height="7.3" fill="#d5d3d1"/><rect x="77" y="0.0" width="7" height="7.3" fill="#e5e3e1"/><rect x="84" y="0.0" width="7" height="7.3" fill="#dcdfe3"/><rect x="0" y="7.0" width="7" height="7.3" fill="#cfd2d6"/><rect x="7" y="7.0" width="7" height="7.3" fill="#e0ddda"/><rect x="14" y="7.0" width="7" height="7.3" fill="#d7d5d3"/><rect x="21" y="7.0" width="7" height="7.3" fill="#d3d1cf"/><rect x="28" y="7.0" width="7" height="7.3" fill="#dcdad8"/><rect x="35" y="7.0" width="7" height="7.3" fill="#c3c3c3"/><rect x="42" y="7.0" width="7" height="7.3" fill="#b6b7bb"/><rect x="49" y="7.0" width="7" height="7.3" fill="#dbd9d7"/><rect x="56" y="7.0" width="7" height="7.3" fill="#cbc9c7"/><rect x="63" y="7.0" width="7" height="7.3" fill="#d8d5d2"/><rect x="70" y="7.0" width="7" height="7.3" fill="#dad8d6"/><rect x="77" y="7.0" width="7" height="7.3" fill="#bebebe"/><rect x="84" y="7.0" width="7" height="7.3" fill="#bdc0c4"/></svg>
<svg class="blur" style="left:49px;top:638px;width:42px;height:21px" viewBox="0 0 42 21.0"><rect x="0" y="0.0" width="7" height="7.3" fill="#eceff3"/><rect x="7" y="0.0" width="7" height="7.3" fill="#e8e6e4"/><rect x="14" y="0.0" width="7" height="7.3" fill="#f0f1f5"/><rect x="21" y="0.0" width="7" height="7.3" fill="#e3e3e3"/><rect x="28" y="0.0" width="7" height="7.3" fill="#f9f6f3"/><rect x="35" y="0.0" width="7" height="7.3" fill="#e1e4e8"/><rect x="0" y="7.0" width="7" height="7.3" fill="#d8d8d8"/><rect x="7" y="7.0" width="7" height="7.3" fill="#b9babe"/><rect x="14" y="7.0" width="7" height="7.3" fill="#d3d0cd"/><rect x="21" y="7.0" width="7" height="7.3" fill="#b9b9b9"/><rect x="28" y="7.0" width="7" height="7.3" fill="#c2bfbc"/><rect x="35" y="7.0" width="7" height="7.3" fill="#c4c2c0"/><rect x="0" y="14.0" width="7" height="7.3" fill="#eeebe8"/><rect x="7" y="14.0" width="7" height="7.3" fill="#e9e9e9"/><rect x="14" y="14.0" width="7" height="7.3" fill="#ebecf0"/><rect x="21" y="14.0" width="7" height="7.3" fill="#edeae7"/><rect x="28" y="14.0" width="7" height="7.3" fill="#eaebef"/><rect x="35" y="14.0" width="7" height="7.3" fill="#eeecea"/></svg>
<svg class="blur" style="left:210px;top:617px;width:231px;height:21px" viewBox="0 0 231 21.0"><rect x="0" y="0.0" width="7" height="7.3" fill="#cfd2d6"/><rect x="7" y="0.0" width="7" height="7.3" fill="#e2e0de"/><rect x="14" y="0.0" width="7" height="7.3" fill="#d2d3d7"/><rect x="21" y="0.0" width="7" height="7.3" fill="#d4d5d9"/><rect x="28" y="0.0" width="7" height="7.3" fill="#e1dedb"/><rect x="35" y="0.0" width="7" height="7.3" fill="#d5d8dc"/><rect x="42" y="0.0" width="7" height="7.3" fill="#d2cfcc"/><rect x="49" y="0.0" width="7" height="7.3" fill="#d7d5d3"/><rect x="56" y="0.0" width="7" height="7.3" fill="#d0d3d7"/><rect x="63" y="0.0" width="7" height="7.3" fill="#e0e3e7"/><rect x="70" y="0.0" width="7" height="7.3" fill="#eeecea"/><rect x="77" y="0.0" width="7" height="7.3" fill="#d0d3d7"/><rect x="84" y="0.0" width="7" height="7.3" fill="#cfd0d4"/><rect x="91" y="0.0" width="7" height="7.3" fill="#cccfd3"/><rect x="98" y="0.0" width="7" height="7.3" fill="#f0eeec"/><rect x="105" y="0.0" width="7" height="7.3" fill="#dddee2"/><rect x="112" y="0.0" width="7" height="7.3" fill="#f4f4f4"/><rect x="119" y="0.0" width="7" height="7.3" fill="#e8e9ed"/><rect x="126" y="0.0" width="7" height="7.3" fill="#faf8f6"/><rect x="133" y="0.0" width="7" height="7.3" fill="#e2e5e9"/><rect x="140" y="0.0" width="7" height="7.3" fill="#dad8d6"/><rect x="147" y="0.0" width="7" height="7.3" fill="#d7d8dc"/><rect x="154" y="0.0" width="7" height="7.3" fill="#cfd2d6"/><rect x="161" y="0.0" width="7" height="7.3" fill="#d8d8d8"/><rect x="168" y="0.0" width="7" height="7.3" fill="#dfdcd9"/><rect x="175" y="0.0" width="7" height="7.3" fill="#d1d2d6"/><rect x="182" y="0.0" width="7" height="7.3" fill="#e5e5e5"/><rect x="189" y="0.0" width="7" height="7.3" fill="#d5d6da"/><rect x="196" y="0.0" width="7" height="7.3" fill="#d3d6da"/><rect x="203" y="0.0" width="7" height="7.3" fill="#e0e1e5"/><rect x="210" y="0.0" width="7" height="7.3" fill="#e8ebef"/><rect x="217" y="0.0" width="7" height="7.3" fill="#e5e5e5"/><rect x="224" y="0.0" width="7" height="7.3" fill="#e5e5e5"/><rect x="0" y="7.0" width="7" height="7.3" fill="#898683"/><rect x="7" y="7.0" width="7" height="7.3" fill="#88898d"/><rect x="14" y="7.0" width="7" height="7.3" fill="#a4a2a0"/><rect x="21" y="7.0" width="7" height="7.3" fill="#909195"/><rect x="28" y="7.0" width="7" height="7.3" fill="#8f8f8f"/><rect x="35" y="7.0" width="7" height="7.3" fill="#848280"/><rect x="42" y="7.0" width="7" height="7.3" fill="#848589"/><rect x="49" y="7.0" width="7" height="7.3" fill="#a1a1a1"/><rect x="56" y="7.0" width="7" height="7.3" fill="#797979"/><rect x="63" y="7.0" width="7" height="7.3" fill="#76777b"/><rect x="70" y="7.0" width="7" height="7.3" fill="#8b8e92"/><rect x="77" y="7.0" width="7" height="7.3" fill="#7c7d81"/><rect x="84" y="7.0" width="7" height="7.3" fill="#8c8d91"/><rect x="91" y="7.0" width="7" height="7.3" fill="#8a8886"/><rect x="98" y="7.0" width="7" height="7.3" fill="#9a9da1"/><rect x="105" y="7.0" width="7" height="7.3" fill="#a09d9a"/><rect x="112" y="7.0" width="7" height="7.3" fill="#e5e8ec"/><rect x="119" y="7.0" width="7" height="7.3" fill="#f9f7f5"/><rect x="126" y="7.0" width="7" height="7.3" fill="#eae7e4"/><rect x="133" y="7.0" width="7" height="7.3" fill="#bbb8b5"/><rect x="140" y="7.0" width="7" height="7.3" fill="#c5c3c1"/><rect x="147" y="7.0" width="7" height="7.3" fill="#bebebe"/><rect x="154" y="7.0" width="7" height="7.3" fill="#bec1c5"/><rect x="161" y="7.0" width="7" height="7.3" fill="#ced1d5"/><rect x="168" y="7.0" width="7" height="7.3" fill="#b8b8b8"/><rect x="175" y="7.0" width="7" height="7.3" fill="#d8dbdf"/><rect x="182" y="7.0" width="7" height="7.3" fill="#dcdde1"/><rect x="189" y="7.0" width="7" height="7.3" fill="#d2d3d7"/><rect x="196" y="7.0" width="7" height="7.3" fill="#dddbd9"/><rect x="203" y="7.0" width="7" height="7.3" fill="#cac7c4"/><rect x="210" y="7.0" width="7" height="7.3" fill="#b8b8b8"/><rect x="217" y="7.0" width="7" height="7.3" fill="#b9babe"/><rect x="224" y="7.0" width="7" height="7.3" fill="#bdbbb9"/><rect x="0" y="14.0" width="7" height="7.3" fill="#eae7e4"/><rect x="7" y="14.0" width="7" height="7.3" fill="#e7e7e7"/><rect x="14" y="14.0" width="7" height="7.3" fill="#e5e5e5"/><rect x="21" y="14.0" width="7" height="7.3" fill="#f3f4f8"/><rect x="28" y="14.0" width="7" height="7.3" fill="#ebe8e5"/><rect x="35" y="14.0" width="7" height="7.3" fill="#f2efec"/><rect x="42" y="14.0" width="7" height="7.3" fill="#f0f1f5"/><rect x="49" y="14.0" width="7" height="7.3" fill="#f4f5f9"/><rect x="56" y="14.0" width="7" height="7.3" fill="#faf8f6"/><rect x="63" y="14.0" width="7" height="7.3" fill="#f8f5f2"/><rect x="70" y="14.0" width="7" height="7.3" fill="#eff2f6"/><rect x="77" y="14.0" width="7" height="7.3" fill="#e1e4e8"/><rect x="84" y="14.0" width="7" height="7.3" fill="#f6f6f6"/><rect x="91" y="14.0" width="7" height="7.3" fill="#eff0f4"/><rect x="98" y="14.0" width="7" height="7.3" fill="#e6e4e2"/><rect x="105" y="14.0" width="7" height="7.3" fill="#f3f1ef"/><rect x="112" y="14.0" width="7" height="7.3" fill="#e8e6e4"/></svg>
<svg class="blur" style="left:210px;top:638px;width:56px;height:21px" viewBox="0 0 56 21.0"><rect x="0" y="0.0" width="7" height="7.3" fill="#eae7e4"/><rect x="7" y="0.0" width="7" height="7.3" fill="#e2e5e9"/><rect x="14" y="0.0" width="7" height="7.3" fill="#e9e9e9"/><rect x="21" y="0.0" width="7" height="7.3" fill="#e2e5e9"/><rect x="28" y="0.0" width="7" height="7.3" fill="#eaeaea"/><rect x="35" y="0.0" width="7" height="7.3" fill="#e8e9ed"/><rect x="42" y="0.0" width="7" height="7.3" fill="#edeef2"/><rect x="49" y="0.0" width="7" height="7.3" fill="#e7eaee"/><rect x="0" y="7.0" width="7" height="7.3" fill="#c5c5c5"/><rect x="7" y="7.0" width="7" height="7.3" fill="#d8d8d8"/><rect x="14" y="7.0" width="7" height="7.3" fill="#bfc2c6"/><rect x="21" y="7.0" width="7" height="7.3" fill="#cac7c4"/><rect x="28" y="7.0" width="7" height="7.3" fill="#bfc2c6"/><rect x="35" y="7.0" width="7" height="7.3" fill="#c8c6c4"/><rect x="42" y="7.0" width="7" height="7.3" fill="#cbccd0"/><rect x="49" y="7.0" width="7" height="7.3" fill="#cbc9c7"/><rect x="0" y="14.0" width="7" height="7.3" fill="#f4f5f9"/><rect x="7" y="14.0" width="7" height="7.3" fill="#f5f3f1"/><rect x="14" y="14.0" width="7" height="7.3" fill="#f2f2f2"/><rect x="21" y="14.0" width="7" height="7.3" fill="#e6e4e2"/><rect x="28" y="14.0" width="7" height="7.3" fill="#e7e8ec"/><rect x="35" y="14.0" width="7" height="7.3" fill="#eeebe8"/><rect x="42" y="14.0" width="7" height="7.3" fill="#ecedf1"/><rect x="49" y="14.0" width="7" height="7.3" fill="#f4f4f4"/></svg>
<svg class="a" style="left:513px;top:612px" width="25" height="19" viewBox="0 0 25 19"><rect width="25" height="19" rx="6" fill="#198754"/><circle cx="12.5" cy="9.3" r="6" fill="#fff"/><path d="M12 6.3 V9.6 L13.9 11" fill="none" stroke="#7fb89a" stroke-width="0.6"/></svg>
<div class="a tn" style="left:546px;top:615px;letter-spacing:0">Wedstrijdtafel</div>
<div class="a loc" style="left:546px;top:640px;letter-spacing:-0.2px">Locatie:</div>
<svg class="blur" style="left:596px;top:642px;width:126px;height:14px" viewBox="0 0 126 14.0"><rect x="0" y="0.0" width="7" height="7.3" fill="#f7f4f1"/><rect x="7" y="0.0" width="7" height="7.3" fill="#e6e6e6"/><rect x="14" y="0.0" width="7" height="7.3" fill="#e2e2e2"/><rect x="21" y="0.0" width="7" height="7.3" fill="#e3e4e8"/><rect x="28" y="0.0" width="7" height="7.3" fill="#e4e7eb"/><rect x="35" y="0.0" width="7" height="7.3" fill="#e6e6e6"/><rect x="42" y="0.0" width="7" height="7.3" fill="#e2e2e2"/><rect x="49" y="0.0" width="7" height="7.3" fill="#e6e6e6"/><rect x="56" y="0.0" width="7" height="7.3" fill="#e4e4e4"/><rect x="63" y="0.0" width="7" height="7.3" fill="#e2e3e7"/><rect x="70" y="0.0" width="7" height="7.3" fill="#f0edea"/><rect x="77" y="0.0" width="7" height="7.3" fill="#f3f3f3"/><rect x="84" y="0.0" width="7" height="7.3" fill="#eeeeee"/><rect x="91" y="0.0" width="7" height="7.3" fill="#ece9e6"/><rect x="98" y="0.0" width="7" height="7.3" fill="#e8e8e8"/><rect x="105" y="0.0" width="7" height="7.3" fill="#e3e3e3"/><rect x="112" y="0.0" width="7" height="7.3" fill="#f6f6f6"/><rect x="119" y="0.0" width="7" height="7.3" fill="#f3f6fa"/><rect x="0" y="7.0" width="7" height="7.3" fill="#dddddd"/><rect x="7" y="7.0" width="7" height="7.3" fill="#d2d2d2"/><rect x="14" y="7.0" width="7" height="7.3" fill="#eae7e4"/><rect x="21" y="7.0" width="7" height="7.3" fill="#d4d7db"/><rect x="28" y="7.0" width="7" height="7.3" fill="#dcdad8"/><rect x="35" y="7.0" width="7" height="7.3" fill="#d6d6d6"/><rect x="42" y="7.0" width="7" height="7.3" fill="#d6d9dd"/><rect x="49" y="7.0" width="7" height="7.3" fill="#e8ebef"/><rect x="56" y="7.0" width="7" height="7.3" fill="#cccfd3"/><rect x="63" y="7.0" width="7" height="7.3" fill="#e8ebef"/><rect x="70" y="7.0" width="7" height="7.3" fill="#e4e5e9"/><rect x="77" y="7.0" width="7" height="7.3" fill="#e2e0de"/><rect x="84" y="7.0" width="7" height="7.3" fill="#e6e9ed"/><rect x="91" y="7.0" width="7" height="7.3" fill="#e1e1e1"/><rect x="98" y="7.0" width="7" height="7.3" fill="#ebe9e7"/><rect x="105" y="7.0" width="7" height="7.3" fill="#d2d0ce"/><rect x="112" y="7.0" width="7" height="7.3" fill="#dedede"/><rect x="119" y="7.0" width="7" height="7.3" fill="#dddbd9"/></svg>
<div class="a" style="left:797px;top:626px;width:14px;height:1px;background:#3d4246"></div>
<div class="a td" style="left:897px;top:615px">1</div>
<div class="a td" style="left:1026px;top:615px">12 jaar</div>
<div class="a" style="left:1193px;top:625px;width:4px;height:1px;background:#212529"></div>
<svg class="a" style="left:1393px;top:616px" width="17" height="17" viewBox="0 0 17 17"><circle cx="8.5" cy="8.5" r="8.3" fill="#dc3545"/><rect x="7.5" y="3.8" width="2" height="6" rx="1" fill="#fff"/><circle cx="8.5" cy="12.3" r="1.1" fill="#fff"/></svg>
<div class="sel" style="top:612px"></div><svg class="a" style="left:1826px;top:627px" width="12" height="8" viewBox="0 0 12 8"><path d="M1 1 L6.0 7.0 L11 1" fill="none" stroke="#343a40" stroke-width="1.6" stroke-linecap="round" stroke-linejoin="round"/></svg><div class="a td" style="left:1488px;top:623px;color:#212529">- Geen toewijzing -</div>
<svg class="blur" style="left:48px;top:687px;width:91px;height:14px" viewBox="0 0 91 14.0"><rect x="0" y="0.0" width="7" height="7.3" fill="#e4e4e4"/><rect x="7" y="0.0" width="7" height="7.3" fill="#dddee2"/><rect x="14" y="0.0" width="7" height="7.3" fill="#d4d4d4"/><rect x="21" y="0.0" width="7" height="7.3" fill="#dde0e4"/><rect x="28" y="0.0" width="7" height="7.3" fill="#d7d5d3"/><rect x="35" y="0.0" width="7" height="7.3" fill="#cccdd1"/><rect x="42" y="0.0" width="7" height="7.3" fill="#d1d4d8"/><rect x="49" y="0.0" width="7" height="7.3" fill="#e6e6e6"/><rect x="56" y="0.0" width="7" height="7.3" fill="#cbced2"/><rect x="63" y="0.0" width="7" height="7.3" fill="#dddddd"/><rect x="70" y="0.0" width="7" height="7.3" fill="#e0ddda"/><rect x="77" y="0.0" width="7" height="7.3" fill="#f0eeec"/><rect x="84" y="0.0" width="7" height="7.3" fill="#dde0e4"/><rect x="0" y="7.0" width="7" height="7.3" fill="#d5d8dc"/><rect x="7" y="7.0" width="7" height="7.3" fill="#dfdcd9"/><rect x="14" y="7.0" width="7" height="7.3" fill="#cdcac7"/><rect x="21" y="7.0" width="7" height="7.3" fill="#cac8c6"/><rect x="28" y="7.0" width="7" height="7.3" fill="#c2c2c2"/><rect x="35" y="7.0" width="7" height="7.3" fill="#c1bfbd"/><rect x="42" y="7.0" width="7" height="7.3" fill="#dbdbdb"/><rect x="49" y="7.0" width="7" height="7.3" fill="#c9ccd0"/><rect x="56" y="7.0" width="7" height="7.3" fill="#c2c0be"/><rect x="63" y="7.0" width="7" height="7.3" fill="#d1d1d1"/><rect x="70" y="7.0" width="7" height="7.3" fill="#d3d3d3"/><rect x="77" y="7.0" width="7" height="7.3" fill="#d2cfcc"/><rect x="84" y="7.0" width="7" height="7.3" fill="#c8cbcf"/></svg>
<svg class="blur" style="left:48px;top:708px;width:42px;height:21px" viewBox="0 0 42 21.0"><rect x="0" y="0.0" width="7" height="7.3" fill="#edeef2"/><rect x="7" y="0.0" width="7" height="7.3" fill="#f5f2ef"/><rect x="14" y="0.0" width="7" height="7.3" fill="#f1eeeb"/><rect x="21" y="0.0" width="7" height="7.3" fill="#f3f0ed"/><rect x="28" y="0.0" width="7" height="7.3" fill="#f1f2f6"/><rect x="35" y="0.0" width="7" height="7.3" fill="#f5f5f5"/><rect x="0" y="7.0" width="7" height="7.3" fill="#cccdd1"/><rect x="7" y="7.0" width="7" height="7.3" fill="#cacbcf"/><rect x="14" y="7.0" width="7" height="7.3" fill="#c5c3c1"/><rect x="21" y="7.0" width="7" height="7.3" fill="#d8dbdf"/><rect x="28" y="7.0" width="7" height="7.3" fill="#c6c4c2"/><rect x="35" y="7.0" width="7" height="7.3" fill="#d1d4d8"/><rect x="0" y="14.0" width="7" height="7.3" fill="#f7f4f1"/><rect x="7" y="14.0" width="7" height="7.3" fill="#e3e6ea"/><rect x="14" y="14.0" width="7" height="7.3" fill="#f3f0ed"/><rect x="21" y="14.0" width="7" height="7.3" fill="#f5f2ef"/><rect x="28" y="14.0" width="7" height="7.3" fill="#e7eaee"/><rect x="35" y="14.0" width="7" height="7.3" fill="#f8f5f2"/></svg>
<div class="a" style="left:213px;top:694px;width:16px;height:1px;background:#495057"></div>
<svg class="a" style="left:513px;top:681px" width="25" height="19" viewBox="0 0 25 19"><rect width="25" height="19" rx="6" fill="#dc3545"/><path d="M8.2 4 H16.9 V13.8 A1 1 0 0 1 15.9 14.8 H8.2 A1 1 0 0 1 7.2 13.8 V5 A1 1 0 0 1 8.2 4Z" fill="#fff"/><path d="M16.9 5.3 H18.3 A1.5 1.5 0 0 1 19.8 6.8 V10.4 A1.5 1.5 0 0 1 18.3 11.9 H16.9Z" fill="#fff"/><rect x="16.9" y="7.3" width="1.2" height="2.6" fill="#e8889a"/><path d="M9.4 7.2 V11.6 M11.5 7.2 V11.6 M13.7 7.2 V11.6" stroke="#f6cdd3" stroke-width="0.7"/></svg>
<div class="a tn" style="left:546px;top:684px;letter-spacing:0">Bardienst</div>
<div class="a loc" style="left:546px;top:709px;letter-spacing:-0.2px">Locatie:</div>
<svg class="blur" style="left:596px;top:711px;width:49px;height:14px" viewBox="0 0 49 14.0"><rect x="0" y="0.0" width="7" height="7.3" fill="#e9e6e3"/><rect x="7" y="0.0" width="7" height="7.3" fill="#eaebef"/><rect x="14" y="0.0" width="7" height="7.3" fill="#eff2f6"/><rect x="21" y="0.0" width="7" height="7.3" fill="#eae7e4"/><rect x="28" y="0.0" width="7" height="7.3" fill="#efece9"/><rect x="35" y="0.0" width="7" height="7.3" fill="#eaeaea"/><rect x="42" y="0.0" width="7" height="7.3" fill="#e7e7e7"/><rect x="0" y="7.0" width="7" height="7.3" fill="#d8d6d4"/><rect x="7" y="7.0" width="7" height="7.3" fill="#d5d2cf"/><rect x="14" y="7.0" width="7" height="7.3" fill="#e4e7eb"/><rect x="21" y="7.0" width="7" height="7.3" fill="#e2e5e9"/><rect x="28" y="7.0" width="7" height="7.3" fill="#d8dbdf"/><rect x="35" y="7.0" width="7" height="7.3" fill="#d4d4d4"/><rect x="42" y="7.0" width="7" height="7.3" fill="#e2e2e2"/></svg>
<div class="a td" style="left:797px;top:684px">± 1,5 uur</div>
<div class="a td" style="left:897px;top:684px">1</div>
<div class="a td" style="left:1026px;top:684px">18 jaar</div>
<div class="a" style="left:1193px;top:694px;width:4px;height:1px;background:#212529"></div>
<svg class="a" style="left:1393px;top:685px" width="17" height="17" viewBox="0 0 17 17"><circle cx="8.5" cy="8.5" r="8.3" fill="#dc3545"/><rect x="7.5" y="3.8" width="2" height="6" rx="1" fill="#fff"/><circle cx="8.5" cy="12.3" r="1.1" fill="#fff"/></svg>
<div class="sel" style="top:681px"></div><svg class="a" style="left:1826px;top:696px" width="12" height="8" viewBox="0 0 12 8"><path d="M1 1 L6.0 7.0 L11 1" fill="none" stroke="#343a40" stroke-width="1.6" stroke-linecap="round" stroke-linejoin="round"/></svg><div class="a td" style="left:1488px;top:692px;color:#212529">- Geen toewijzing -</div>
<svg class="blur" style="left:50px;top:755px;width:84px;height:14px" viewBox="0 0 84 14.0"><rect x="0" y="0.0" width="7" height="7.3" fill="#d9d6d3"/><rect x="7" y="0.0" width="7" height="7.3" fill="#eeecea"/><rect x="14" y="0.0" width="7" height="7.3" fill="#dcdcdc"/><rect x="21" y="0.0" width="7" height="7.3" fill="#d2d0ce"/><rect x="28" y="0.0" width="7" height="7.3" fill="#edebe9"/><rect x="35" y="0.0" width="7" height="7.3" fill="#e7e4e1"/><rect x="42" y="0.0" width="7" height="7.3" fill="#dbdee2"/><rect x="49" y="0.0" width="7" height="7.3" fill="#dcdcdc"/><rect x="56" y="0.0" width="7" height="7.3" fill="#cfd2d6"/><rect x="63" y="0.0" width="7" height="7.3" fill="#e5e3e1"/><rect x="70" y="0.0" width="7" height="7.3" fill="#d1cecb"/><rect x="77" y="0.0" width="7" height="7.3" fill="#efedeb"/><rect x="0" y="7.0" width="7" height="7.3" fill="#dadbdf"/><rect x="7" y="7.0" width="7" height="7.3" fill="#d5d2cf"/><rect x="14" y="7.0" width="7" height="7.3" fill="#e0ddda"/><rect x="21" y="7.0" width="7" height="7.3" fill="#c3c3c3"/><rect x="28" y="7.0" width="7" height="7.3" fill="#d9d7d5"/><rect x="35" y="7.0" width="7" height="7.3" fill="#c9ccd0"/><rect x="42" y="7.0" width="7" height="7.3" fill="#c2c0be"/><rect x="49" y="7.0" width="7" height="7.3" fill="#cbc9c7"/><rect x="56" y="7.0" width="7" height="7.3" fill="#bfc2c6"/><rect x="63" y="7.0" width="7" height="7.3" fill="#d7d5d3"/><rect x="70" y="7.0" width="7" height="7.3" fill="#d5d5d5"/><rect x="77" y="7.0" width="7" height="7.3" fill="#d0d1d5"/></svg>
<svg class="blur" style="left:50px;top:776px;width:35px;height:21px" viewBox="0 0 35 21.0"><rect x="0" y="0.0" width="7" height="7.3" fill="#e4e7eb"/><rect x="7" y="0.0" width="7" height="7.3" fill="#e6e4e2"/><rect x="14" y="0.0" width="7" height="7.3" fill="#f1f1f1"/><rect x="21" y="0.0" width="7" height="7.3" fill="#e0e3e7"/><rect x="28" y="0.0" width="7" height="7.3" fill="#f6f3f0"/><rect x="0" y="7.0" width="7" height="7.3" fill="#c5c2bf"/><rect x="7" y="7.0" width="7" height="7.3" fill="#d6d9dd"/><rect x="14" y="7.0" width="7" height="7.3" fill="#bcbdc1"/><rect x="21" y="7.0" width="7" height="7.3" fill="#d3d4d8"/><rect x="28" y="7.0" width="7" height="7.3" fill="#c9c7c5"/><rect x="0" y="14.0" width="7" height="7.3" fill="#f2f2f2"/><rect x="7" y="14.0" width="7" height="7.3" fill="#f3f6fa"/><rect x="14" y="14.0" width="7" height="7.3" fill="#eff2f6"/><rect x="21" y="14.0" width="7" height="7.3" fill="#f3f1ef"/><rect x="28" y="14.0" width="7" height="7.3" fill="#ebe8e5"/></svg>
<div class="a" style="left:213px;top:763px;width:16px;height:1px;background:#495057"></div>
<svg class="a" style="left:513px;top:750px" width="25" height="19" viewBox="0 0 25 19"><rect width="25" height="19" rx="6" fill="#dc3545"/><path d="M8.2 4 H16.9 V13.8 A1 1 0 0 1 15.9 14.8 H8.2 A1 1 0 0 1 7.2 13.8 V5 A1 1 0 0 1 8.2 4Z" fill="#fff"/><path d="M16.9 5.3 H18.3 A1.5 1.5 0 0 1 19.8 6.8 V10.4 A1.5 1.5 0 0 1 18.3 11.9 H16.9Z" fill="#fff"/><rect x="16.9" y="7.3" width="1.2" height="2.6" fill="#e8889a"/><path d="M9.4 7.2 V11.6 M11.5 7.2 V11.6 M13.7 7.2 V11.6" stroke="#f6cdd3" stroke-width="0.7"/></svg>
<div class="a tn" style="left:546px;top:753px;letter-spacing:0">Bardienst</div>
<div class="a loc" style="left:546px;top:778px;letter-spacing:-0.2px">Locatie:</div>
<svg class="blur" style="left:596px;top:780px;width:49px;height:14px" viewBox="0 0 49 14.0"><rect x="0" y="0.0" width="7" height="7.3" fill="#ecedf1"/><rect x="7" y="0.0" width="7" height="7.3" fill="#e3e4e8"/><rect x="14" y="0.0" width="7" height="7.3" fill="#ededed"/><rect x="21" y="0.0" width="7" height="7.3" fill="#e7eaee"/><rect x="28" y="0.0" width="7" height="7.3" fill="#f2f0ee"/><rect x="35" y="0.0" width="7" height="7.3" fill="#e3e3e3"/><rect x="42" y="0.0" width="7" height="7.3" fill="#e8e6e4"/><rect x="0" y="7.0" width="7" height="7.3" fill="#efedeb"/><rect x="7" y="7.0" width="7" height="7.3" fill="#dfe2e6"/><rect x="14" y="7.0" width="7" height="7.3" fill="#dde0e4"/><rect x="21" y="7.0" width="7" height="7.3" fill="#d4d1ce"/><rect x="28" y="7.0" width="7" height="7.3" fill="#dbd9d7"/><rect x="35" y="7.0" width="7" height="7.3" fill="#eaebef"/><rect x="42" y="7.0" width="7" height="7.3" fill="#d9d7d5"/></svg>
<div class="a td" style="left:797px;top:753px">± 1,5 uur</div>
<div class="a td" style="left:897px;top:753px">1</div>
<div class="a td" style="left:1026px;top:753px">18 jaar</div>
<div class="a" style="left:1193px;top:763px;width:4px;height:1px;background:#212529"></div>
<svg class="a" style="left:1393px;top:754px" width="17" height="17" viewBox="0 0 17 17"><circle cx="8.5" cy="8.5" r="8.3" fill="#dc3545"/><rect x="7.5" y="3.8" width="2" height="6" rx="1" fill="#fff"/><circle cx="8.5" cy="12.3" r="1.1" fill="#fff"/></svg>
<div class="sel" style="top:750px"></div><svg class="a" style="left:1826px;top:765px" width="12" height="8" viewBox="0 0 12 8"><path d="M1 1 L6.0 7.0 L11 1" fill="none" stroke="#343a40" stroke-width="1.6" stroke-linecap="round" stroke-linejoin="round"/></svg><div class="a td" style="left:1488px;top:761px;color:#212529">- Geen toewijzing -</div>
<div class="a" style="left:45px;top:852px;font-size:13px;line-height:16px;letter-spacing:0.25px;color:#495057">Totaal: <b style="color:#212529">7</b> taken</div>
<div class="a" style="left:1717px;top:852px;font-size:13px;line-height:16px;letter-spacing:0.25px;font-weight:bold;color:#212529">Per pagina:</div>
<div class="inp" style="left:1799px;top:843px;width:62px;height:31px"></div>
<div class="a" style="left:1808px;top:852px;font-size:13px;line-height:16px;color:#212529">10</div>
<svg class="a" style="left:1834px;top:855px" width="12" height="8" viewBox="0 0 12 8"><path d="M1 1 L6.0 7.0 L11 1" fill="none" stroke="#343a40" stroke-width="1.6" stroke-linecap="round" stroke-linejoin="round"/></svg>
<div class="a" style="left:0;top:904px;width:1905px;height:41px;background:#f8f9fa;border-top:1px solid #dee2e6"></div>
<div class="a" style="left:856px;top:918px;font-size:14px;line-height:18px;color:#6c757d">© Takenplanner - <b style="color:#495057">HV Forte '83</b></div>
<div class="a" style="left:1870px;top:912px;width:27px;height:26px;border:1px solid #6c757d;border-radius:5px"></div>
<svg class="a" style="left:1876px;top:918px" width="16" height="16" viewBox="0 0 16 16"><circle cx="5.8" cy="4.2" r="3.5" fill="#6c757d"/><path d="M0.2 15 C0.4 11.3 2.5 9 5.8 9 C6.8 9 7.4 9.2 7.9 9.4 V15Z" fill="#6c757d"/><path d="M11.8 8.1 L15.9 9.7 C15.9 13 14.2 15.2 11.8 15.9 C9.4 15.2 7.7 13 7.7 9.7Z" fill="#6c757d" stroke="#f8f9fa" stroke-width="0.7"/><path d="M11.8 9.6 V14.3 C13.2 13.6 14.3 12.3 14.4 10.5Z" fill="#f8f9fa"/></svg>
</body></html>
